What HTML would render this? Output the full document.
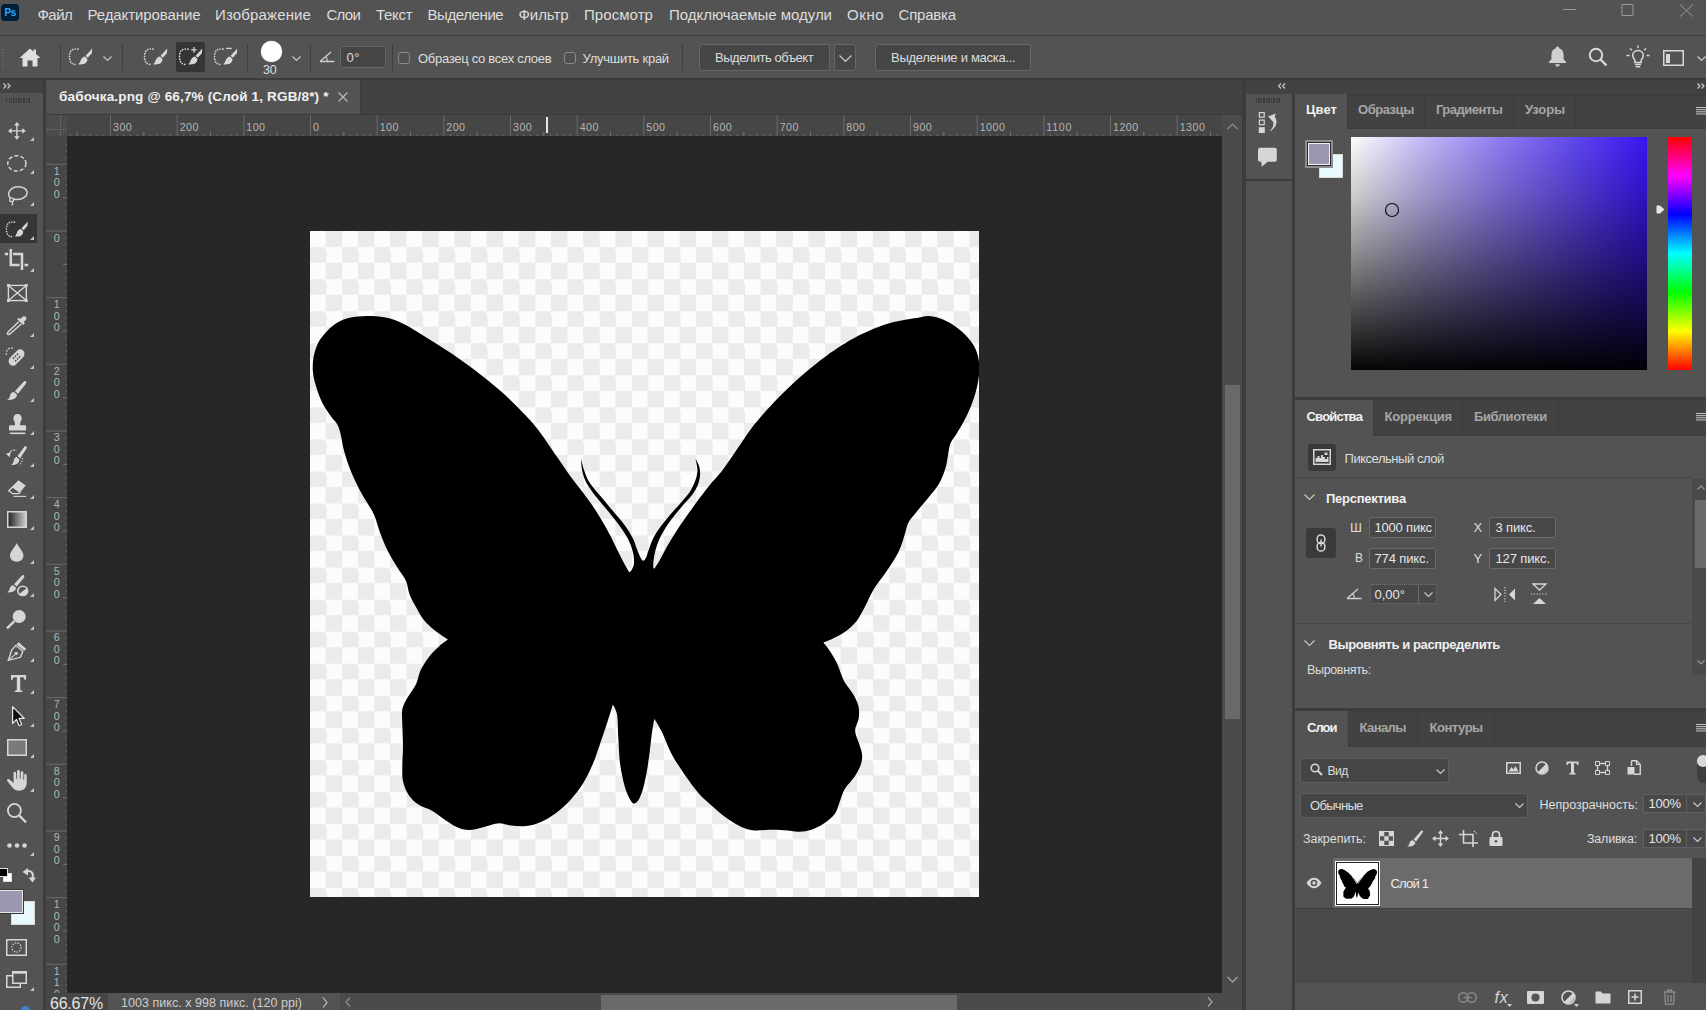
<!DOCTYPE html>
<html lang="ru"><head><meta charset="utf-8"><title>Photoshop</title>
<style>
html,body{margin:0;padding:0;}
body{width:1706px;height:1010px;overflow:hidden;background:#535353;position:relative;font-family:"Liberation Sans",sans-serif;}
div,span,svg{position:absolute;display:block;box-sizing:border-box;}
span{white-space:nowrap;}
svg{overflow:visible;}
</style></head><body>
<div style="left:0px;top:35px;width:1706px;height:1px;background:#3d3d3d;"></div>
<div style="left:0px;top:78px;width:1706px;height:2px;background:#3c3c3c;"></div>
<div style="left:0px;top:80px;width:43px;height:13px;background:#424242;"></div>
<div style="left:43px;top:80px;width:3px;height:930px;background:#3c3c3c;"></div>
<div style="left:46px;top:80px;width:1196px;height:34px;background:#424242;"></div>
<div style="left:46px;top:80px;width:314px;height:34px;background:#535353;"></div>
<div style="left:360px;top:80px;width:1px;height:34px;background:#3c3c3c;"></div>
<div style="left:46px;top:114px;width:1196px;height:1px;background:#3c3c3c;"></div>
<div style="left:46px;top:115px;width:1176px;height:21px;background:#464646;"></div>
<div style="left:46px;top:136px;width:21px;height:857px;background:#464646;"></div>
<div style="left:67px;top:136px;width:1155px;height:857px;background:#272727;"></div>
<div style="left:310px;top:231px;width:669px;height:666px;background:repeating-conic-gradient(#ebebeb 0% 25%,#fcfcfc 0% 50%) 0 -0.4px/32.2px 32.06px;"></div>
<svg style="left:310px;top:231px;overflow:hidden;" width="669" height="666" viewBox="0 0 669 666"><path fill="#000" d="M319.2 341.3C319.6 340.9 321.0 340.2 321.8 338.7C322.6 337.2 323.8 335.1 324.0 332.3C324.2 329.5 323.9 325.6 323.1 322.0C322.3 318.4 321.1 314.5 319.2 310.4C317.3 306.3 314.9 302.4 311.5 297.5C308.1 292.6 302.9 286.2 298.6 280.8C294.3 275.4 289.5 270.2 285.7 265.3C282.0 260.4 278.4 255.5 276.1 251.2C273.9 246.9 273.1 243.6 272.2 239.6C271.3 235.6 271.1 229.4 270.9 227.4C271.5 229.4 272.8 235.6 274.2 239.6C275.6 243.6 276.7 247.1 279.3 251.2C281.9 255.3 285.7 259.3 289.6 264.0C293.5 268.7 298.2 274.4 302.5 279.5C306.8 284.6 311.9 290.2 315.3 294.9C318.7 299.6 321.2 303.9 323.1 307.8C325.0 311.7 325.7 315.1 326.9 318.1C328.1 321.1 329.1 323.9 330.1 325.8C331.1 327.7 332.0 329.5 333.0 329.7C334.0 329.9 335.0 328.8 335.9 327.1C336.8 325.4 337.3 322.6 338.5 319.4C339.7 316.2 341.1 311.7 343.0 307.8C344.9 303.9 347.2 300.3 350.1 296.2C353.0 292.1 356.8 287.7 360.4 283.4C364.0 279.1 368.6 274.6 372.0 270.5C375.4 266.4 378.6 262.8 381.0 258.9C383.4 255.0 385.0 250.7 386.1 247.3C387.2 243.9 387.5 241.6 387.4 238.3C387.3 235.0 385.8 229.2 385.5 227.4C386.1 228.8 388.5 232.8 389.3 235.7C390.0 238.6 390.3 241.5 390.0 244.7C389.7 247.9 388.9 251.6 387.4 255.0C385.9 258.4 383.8 261.7 381.0 265.3C378.2 268.9 374.1 272.8 370.7 276.9C367.3 281.0 363.6 285.3 360.4 289.8C357.2 294.3 353.8 299.4 351.4 303.9C349.0 308.4 347.5 312.7 346.2 316.8C344.9 320.9 344.2 325.2 343.7 328.4C343.2 331.6 343.2 334.5 343.3 336.1C343.4 337.7 344.1 337.4 344.3 337.7C345.3 336.2 347.9 332.3 350.1 328.4C352.4 324.5 354.8 319.4 357.8 314.2C360.8 309.1 364.5 303.1 368.1 297.5C371.8 291.9 376.1 286.0 379.7 280.8C383.4 275.7 386.6 271.1 390.0 266.6C393.4 262.1 396.2 258.4 400.0 253.7C403.8 249.0 407.8 245.4 413.0 238.5C418.2 231.6 425.7 220.1 431.0 212.5C436.3 204.9 438.9 200.2 444.9 192.8C450.9 185.4 459.3 176.1 467.1 168.0C474.9 159.9 483.6 151.7 491.9 144.5C500.1 137.3 508.4 130.7 516.6 124.7C524.9 118.7 534.4 112.7 541.4 108.6C548.4 104.5 552.5 102.6 558.7 99.9C564.9 97.2 571.9 94.4 578.5 92.5C585.1 90.6 593.3 89.2 598.3 88.3C603.2 87.4 604.9 87.3 608.2 86.8C611.5 86.3 614.4 85.0 618.1 85.1C621.8 85.2 626.4 86.2 630.5 87.6C634.6 89.1 638.8 91.1 642.9 93.8C647.0 96.5 651.7 100.2 655.2 103.7C658.7 107.2 661.8 111.1 663.9 114.8C666.0 118.5 667.2 122.0 668.1 125.9C669.0 129.8 669.5 133.8 669.4 138.3C669.3 142.9 668.7 147.8 667.6 153.2C666.5 158.6 664.8 164.7 662.7 170.5C660.6 176.3 657.9 182.4 655.2 187.8C652.5 193.2 649.1 198.6 646.6 202.7C644.1 206.8 641.9 208.9 640.4 212.6C638.9 216.3 638.7 220.8 637.9 224.9C637.1 229.0 636.8 232.8 635.4 237.3C634.0 241.9 632.2 247.2 629.3 252.2C626.4 257.1 622.0 262.1 618.1 267.0C614.2 271.9 609.0 277.8 605.7 281.9C602.4 286.0 600.1 288.1 598.3 291.8C596.4 295.5 596.2 299.2 594.6 304.1C593.0 309.0 591.5 315.1 588.4 321.2C585.3 327.4 580.1 334.8 576.0 341.0C571.9 347.2 567.2 352.5 563.7 358.3C560.2 364.1 557.9 370.2 555.0 375.6C552.1 381.0 549.8 386.2 546.3 390.5C542.8 394.8 538.1 398.6 534.0 401.6C529.9 404.6 525.0 406.6 521.6 408.3C518.2 409.9 514.8 411.0 513.4 411.5C514.4 412.8 516.9 415.7 519.1 419.0C521.3 422.3 524.0 426.1 526.5 431.3C529.0 436.4 531.3 444.7 534.0 449.9C536.7 455.1 540.2 458.2 542.6 462.3C545.0 466.4 547.3 470.5 548.3 474.6C549.3 478.7 549.3 482.9 548.8 487.0C548.3 491.1 545.1 495.3 545.1 499.4C545.1 503.5 547.6 507.9 548.8 511.8C549.9 515.7 551.6 519.3 552.0 522.9C552.4 526.5 552.1 529.4 550.9 533.2C549.7 537.0 547.4 541.4 544.7 545.5C542.0 549.6 537.3 553.8 534.8 557.9C532.3 562.0 531.5 566.2 529.9 570.3C528.2 574.4 527.6 579.0 524.9 582.7C522.2 586.4 517.7 589.9 513.8 592.6C509.9 595.3 505.5 597.4 501.4 598.8C497.3 600.1 493.5 600.6 489.0 600.7C484.5 600.8 479.2 599.5 474.2 599.2C469.2 598.9 464.2 598.8 459.3 598.8C454.3 598.8 449.0 599.9 444.5 599.5C440.0 599.1 436.6 598.3 432.1 596.3C427.6 594.3 422.2 591.1 417.2 587.6C412.2 584.1 407.1 579.4 402.4 575.2C397.7 571.0 393.5 567.9 388.8 562.5C384.1 557.1 378.5 549.3 374.0 542.7C369.5 536.1 365.3 529.9 361.6 522.9C357.9 515.9 354.6 506.5 351.7 500.6C348.8 494.7 345.5 489.9 344.3 487.7C343.9 490.3 342.7 496.4 341.8 503.1C340.9 509.8 340.0 519.5 338.8 527.8C337.6 536.0 336.0 546.0 334.4 552.6C332.8 559.2 331.1 564.1 329.4 567.4C327.7 570.7 325.6 572.4 324.0 572.4C322.4 572.4 321.1 570.3 319.5 567.4C317.9 564.5 316.2 560.8 314.6 555.0C313.0 549.2 311.1 540.6 310.1 532.8C309.1 525.0 308.9 516.1 308.4 508.0C307.9 499.9 308.0 489.8 307.1 484.0C306.2 478.2 303.6 475.2 302.9 473.4C302.0 476.3 299.6 484.1 297.5 490.7C295.4 497.3 292.4 506.0 290.0 513.0C287.6 520.0 285.7 526.2 282.9 532.8C280.1 539.4 276.7 546.6 273.0 552.6C269.3 558.6 265.1 563.8 260.6 568.7C256.1 573.7 250.7 578.6 245.7 582.3C240.8 586.0 235.9 588.8 230.9 590.9C225.9 593.0 221.0 594.5 216.0 595.1C211.0 595.7 205.7 595.1 201.2 594.6C196.7 594.1 193.3 592.0 188.8 592.2C184.3 592.4 178.9 594.8 174.0 595.9C169.1 597.0 163.7 598.9 159.1 598.9C154.6 598.9 150.8 597.6 146.7 595.9C142.6 594.2 138.5 591.2 134.4 588.5C130.3 585.8 126.3 582.3 122.0 579.8C117.7 577.3 112.3 576.3 108.4 573.6C104.5 570.9 101.1 567.6 98.5 563.7C95.9 559.8 94.0 554.9 93.0 550.1C92.0 545.4 92.3 541.0 92.3 535.2C92.3 529.4 93.0 522.4 93.0 515.4C93.0 508.4 92.4 499.4 92.3 493.2C92.2 487.0 91.5 482.6 92.3 478.3C93.1 474.0 94.9 471.3 97.2 467.2C99.5 463.1 103.6 458.4 105.9 453.6C108.2 448.9 108.4 443.6 110.8 438.7C113.2 433.8 117.4 427.9 120.5 424.0C123.6 420.1 126.3 417.8 129.2 415.2C132.1 412.6 136.4 409.7 137.9 408.6C135.6 407.0 128.4 402.5 124.3 399.1C120.2 395.7 116.2 391.9 113.1 388.0C110.0 384.1 108.0 379.7 105.7 375.6C103.4 371.5 101.1 367.6 99.5 363.3C97.9 359.0 97.9 354.1 95.8 349.6C93.7 345.1 90.2 341.1 87.1 336.0C84.0 330.9 80.1 324.5 77.2 318.7C74.3 313.0 72.1 307.2 70.0 301.5C67.9 295.8 66.3 289.0 64.3 284.3C62.3 279.6 60.6 277.5 58.1 273.2C55.6 268.9 52.3 264.0 49.4 258.4C46.5 252.8 43.2 246.2 40.7 239.8C38.1 233.4 35.8 226.0 34.1 220.0C32.5 214.0 31.9 208.2 30.8 203.9C29.7 199.6 29.2 197.1 27.6 194.0C26.0 190.9 23.4 189.0 20.9 185.3C18.3 181.6 14.8 176.6 12.3 171.7C9.8 166.8 7.7 160.8 6.1 155.6C4.5 150.5 3.3 145.8 2.9 140.8C2.5 135.9 2.7 130.8 3.6 125.9C4.6 120.9 6.3 115.4 8.6 111.1C10.9 106.8 14.1 103.1 17.2 99.9C20.3 96.7 23.4 94.0 27.1 91.8C30.8 89.6 34.6 87.9 39.5 86.8C44.4 85.7 51.0 85.2 56.8 85.1C62.6 85.0 68.8 85.4 74.2 86.3C79.6 87.2 84.1 88.7 89.0 90.8C93.9 92.9 98.1 95.3 103.9 98.7C109.7 102.1 116.3 106.4 123.7 111.1C131.1 115.9 140.1 121.4 148.4 127.2C156.6 133.0 165.4 139.5 173.2 145.7C181.0 151.9 188.4 157.9 195.4 164.3C202.4 170.7 209.4 177.9 215.2 184.1C221.0 190.3 224.8 194.4 230.1 201.4C235.4 208.4 242.1 218.9 247.1 226.1C252.1 233.3 255.7 238.8 260.0 244.7C264.3 250.6 268.6 255.7 272.9 261.5C277.2 267.3 281.4 272.9 285.7 279.5C290.0 286.1 295.0 294.8 298.6 301.4C302.2 308.0 305.0 314.2 307.6 319.4C310.2 324.5 312.2 328.6 314.1 332.3C316.0 335.9 318.4 339.8 319.2 341.3Z"/></svg>
<div style="left:1222px;top:115px;width:20px;height:878px;background:#4b4b4b;"></div>
<div style="left:1225px;top:385px;width:15px;height:334px;background:#696969;"></div>
<div style="left:46px;top:993px;width:1196px;height:17px;background:#4b4b4b;"></div>
<div style="left:601px;top:995px;width:356px;height:15px;background:#6a6a6a;"></div>
<div style="left:46px;top:993px;width:62px;height:17px;background:#424242;"></div>
<div style="left:108px;top:993px;width:232px;height:17px;background:#535353;"></div>
<div style="left:1242px;top:80px;width:4px;height:930px;background:#3c3c3c;"></div>
<div style="left:1246px;top:80px;width:460px;height:14px;background:#424242;"></div>
<div style="left:1246px;top:94px;width:46px;height:85px;background:#535353;"></div>
<div style="left:1246px;top:179px;width:46px;height:2px;background:#3c3c3c;"></div>
<div style="left:1246px;top:181px;width:46px;height:829px;background:#535353;"></div>
<div style="left:1292px;top:94px;width:3px;height:916px;background:#3c3c3c;"></div>
<div style="left:0px;top:214px;width:37px;height:29px;background:#353535;"></div>
<svg style="left:7.5px;top:121.9px;" width="17.8" height="17.8"><g transform="translate(-0.36 -0.36) scale(0.712 0.712)"><path d="M13 3V23M3 13H23" stroke="#d6d6d6" fill="none" stroke-width="1.9"/><path d="M13 0.5L9 5.5H17ZM13 25.5L9 20.5H17ZM0.5 13L5.5 9V17ZM25.5 13L20.5 9V17Z" fill="#d6d6d6"/></g></svg>
<svg style="left:30px;top:137px;" width="4" height="4" viewBox="0 0 4 4"><path d="M4 0V4H0Z" fill="#c4c4c4"/></svg>
<svg style="left:7px;top:155px;" width="19.7" height="16.8"><g transform="translate(-2.60 -4.03) scale(0.958 0.956)"><ellipse cx="13" cy="13" rx="9.5" ry="8" stroke="#d6d6d6" fill="none" stroke-width="1.5" stroke-dasharray="4.2 2.2"/></g></svg>
<svg style="left:30px;top:170px;" width="4" height="4" viewBox="0 0 4 4"><path d="M4 0V4H0Z" fill="#c4c4c4"/></svg>
<svg style="left:7.9px;top:186px;" width="19.8" height="20"><g transform="translate(-2.78 -4.68) scale(0.958 0.979)"><path d="M5.5 17.5C1 13 5 5.5 13.5 5.5C20.5 5.5 24 9.5 22.5 13.5C21 17.5 14.5 19.5 8 18" stroke="#d6d6d6" fill="none" stroke-width="1.5"/><circle cx="6.7" cy="18.8" r="2" stroke="#d6d6d6" fill="none" stroke-width="1.3"/><path d="M7 20.5C8.5 22 8 23.5 6.5 24.5" stroke="#d6d6d6" fill="none" stroke-width="1.3"/></g></svg>
<svg style="left:30px;top:202px;" width="4" height="4" viewBox="0 0 4 4"><path d="M4 0V4H0Z" fill="#c4c4c4"/></svg>
<svg style="left:5.9px;top:220.7px;" width="22.2" height="16.1"><g transform="translate(-1.01 -1.88) scale(0.939 0.949)"><path d="M10 3.2C4 2.2 1.5 5 1.5 10.5C1.5 16.5 4 18.8 9 18.5" stroke="#d6d6d6" stroke-width="1.7" stroke-dasharray="0.1 2.55" stroke-linecap="round" fill="none"/><path d="M24.3 2.4L23.8 7.2L19.8 11.8L17.6 9.7Z" fill="#d6d6d6"/><path d="M17 10.4L19.3 12.7C19.8 15 18 18 14.5 18.3C12.8 18.5 11.3 18.4 10.2 18.2C11.8 17.2 12 15.8 12.8 14C13.6 12 15.2 10.6 17 10.4Z" fill="#d6d6d6"/></g></svg>
<svg style="left:30px;top:236px;" width="4" height="4" viewBox="0 0 4 4"><path d="M4 0V4H0Z" fill="#c4c4c4"/></svg>
<svg style="left:4px;top:248px;" width="26" height="24" viewBox="0 0 26 24"><path d="M6.8 1V17H15.5M9 6H18V22" stroke="#d6d6d6" fill="none" stroke-width="2.5"/><path d="M0.8 6H4M20.5 17H24.2" stroke="#d6d6d6" fill="none" stroke-width="2.5"/></svg>
<svg style="left:30px;top:268px;" width="4" height="4" viewBox="0 0 4 4"><path d="M4 0V4H0Z" fill="#c4c4c4"/></svg>
<svg style="left:7px;top:284px;" width="20.7" height="18"><g transform="translate(-1.88 -2.84) scale(0.941 0.947)"><rect x="3.5" y="4.5" width="19" height="16" stroke="#d6d6d6" fill="none" stroke-width="1.5"/><path d="M3.5 4.5L22.5 20.5M22.5 4.5L3.5 20.5" stroke="#d6d6d6" fill="none" stroke-width="1.5"/><path d="M2 3H5V6H2ZM21 3H24V6H21ZM2 19H5V22H2ZM21 19H24V22H21Z" fill="#d6d6d6"/></g></svg>
<svg style="left:7px;top:316px;" width="19.7" height="18.8"><g transform="translate(-2.49 -1.07) scale(0.941 0.866)"><path d="M19.5 2C21.2 0.8 23.7 2.3 23.2 4.8C23 5.8 22 6.7 20.3 8.2L21.8 9.7L19.9 11.6L13.4 5.1L15.3 3.2L16.8 4.7C17.8 3.5 18.6 2.6 19.5 2Z" fill="#d6d6d6"/><path d="M15.2 8L5 18.2C3.6 19.6 2.8 20.4 3 21.6C3.2 22.8 4.8 23 6 21.8L17.8 10.6" stroke="#d6d6d6" fill="none" stroke-width="1.6"/></g></svg>
<svg style="left:30px;top:333px;" width="4" height="4" viewBox="0 0 4 4"><path d="M4 0V4H0Z" fill="#c4c4c4"/></svg>
<svg style="left:6.2px;top:346.7px;" width="20.5" height="21"><g transform="translate(-1.06 -1.68) scale(0.799 0.880)"><path d="M10 3.5C5 1.5 0.5 5.5 2 12" stroke="#d6d6d6" fill="none" stroke-width="1.4" stroke-dasharray="2.2 1.7"/><g transform="rotate(-42 14 14)"><rect x="3" y="9" width="23" height="10.5" rx="5.2" fill="#d6d6d6"/><circle cx="11.2" cy="12.3" r="1.15" fill="#535353"/><circle cx="14.5" cy="12.3" r="1.15" fill="#535353"/><circle cx="17.8" cy="12.3" r="1.15" fill="#535353"/><circle cx="11.2" cy="16.3" r="1.15" fill="#535353"/><circle cx="14.5" cy="16.3" r="1.15" fill="#535353"/><circle cx="17.8" cy="16.3" r="1.15" fill="#535353"/></g></g></svg>
<svg style="left:30px;top:365px;" width="4" height="4" viewBox="0 0 4 4"><path d="M4 0V4H0Z" fill="#c4c4c4"/></svg>
<svg style="left:7px;top:381px;" width="19.4" height="19"><g transform="translate(-2.76 -1.01) scale(0.920 0.886)"><path d="M23.2 1.3C24.4 1.9 24.3 3.4 23.4 4.6L15 15.5L11.6 12.6L20.8 2.2C21.6 1.3 22.4 0.9 23.2 1.3Z" fill="#d6d6d6"/><path d="M10.6 13.6L13.8 16.4C14.2 20 10 23.2 3 22.5C5.5 21 6 19.5 6.3 17.5C6.6 15.3 8.5 13.7 10.6 13.6Z" fill="#d6d6d6"/></g></svg>
<svg style="left:30px;top:398px;" width="4" height="4" viewBox="0 0 4 4"><path d="M4 0V4H0Z" fill="#c4c4c4"/></svg>
<svg style="left:9.3px;top:414px;" width="17.1" height="19.3"><g transform="translate(-3.40 -2.00) scale(0.919 1.000)"><path d="M13 2C15.8 2 17.5 4 17.5 6.3C17.5 8.5 15.8 9.8 15.8 12V13.3H21C21.8 13.3 22.3 13.8 22.3 14.6V18.5H3.7V14.6C3.7 13.8 4.2 13.3 5 13.3H10.2V12C10.2 9.8 8.5 8.5 8.5 6.3C8.5 4 10.2 2 13 2Z" fill="#d6d6d6"/><path d="M4.5 21.3H21.5" stroke="#d6d6d6" fill="none" stroke-width="1.6"/></g></svg>
<svg style="left:30px;top:431px;" width="4" height="4" viewBox="0 0 4 4"><path d="M4 0V4H0Z" fill="#c4c4c4"/></svg>
<svg style="left:6.2px;top:446px;" width="20.8" height="19.4"><g transform="translate(-0.43 -1.07) scale(0.853 0.930)"><path d="M24 1.3C25.2 1.9 25.1 3.3 24.2 4.5L17 14.6L14 12L21.8 2.2C22.5 1.3 23.2 0.9 24 1.3Z" fill="#d6d6d6"/><path d="M13.1 13L16.1 15.6C16.4 19 13 22 6.5 21.5C8.7 20.2 9.3 18.8 9.6 17C9.9 14.8 11.4 13.2 13.1 13Z" fill="#d6d6d6"/><path d="M3.5 10.5C5 6.5 9 4.5 13 6" stroke="#d6d6d6" fill="none" stroke-width="1.3" stroke-dasharray="2.4 1.4"/><path d="M0.5 9.5L6.2 7.8L4.6 13.2Z" fill="#d6d6d6"/><path d="M19.5 14C20 17 18.5 20 16 22" stroke="#d6d6d6" fill="none" stroke-width="1.2" stroke-dasharray="1.3 1.6"/></g></svg>
<svg style="left:30px;top:463px;" width="4" height="4" viewBox="0 0 4 4"><path d="M4 0V4H0Z" fill="#c4c4c4"/></svg>
<svg style="left:7.5px;top:480px;" width="18.5" height="16.7"><g transform="translate(-3.83 -2.31) scale(0.918 0.870)"><path d="M15.5 3L23.5 9L16.5 18H9L4.5 14.8Z" fill="#d6d6d6"/><path d="M5 15L9.3 18.3H16L17.2 16.8L9.2 10.8Z" fill="#535353" stroke="#d6d6d6" stroke-width="1.4"/><path d="M10 21.5H24" stroke="#d6d6d6" fill="none" stroke-width="1.3"/></g></svg>
<svg style="left:30px;top:495px;" width="4" height="4" viewBox="0 0 4 4"><path d="M4 0V4H0Z" fill="#c4c4c4"/></svg>
<svg style="left:7px;top:511px;" width="20" height="17" viewBox="0 0 20 17"><defs><linearGradient id="gg" x1="0" x2="1"><stop offset="0.05" stop-color="#2a2a2a"/><stop offset="1" stop-color="#cfcfcf"/></linearGradient></defs><rect x="0.75" y="0.75" width="18.5" height="15.5" fill="url(#gg)" stroke="#d6d6d6" stroke-width="1.5"/></svg>
<svg style="left:30px;top:526px;" width="4" height="4" viewBox="0 0 4 4"><path d="M4 0V4H0Z" fill="#c4c4c4"/></svg>
<svg style="left:10.3px;top:543.3px;" width="13.5" height="18.7"><g transform="translate(-6.75 -2.34) scale(1.038 0.935)"><path d="M13 2.5C15 7.5 19.5 11.5 19.5 16C19.5 20 16.7 22.5 13 22.5C9.3 22.5 6.5 20 6.5 16C6.5 11.5 11 7.5 13 2.5Z" fill="#d6d6d6"/></g></svg>
<svg style="left:30px;top:560px;" width="4" height="4" viewBox="0 0 4 4"><path d="M4 0V4H0Z" fill="#c4c4c4"/></svg>
<svg style="left:7px;top:575px;" width="20.7" height="20.7"><g transform="translate(-3.04 -1.15) scale(1.014 0.973)"><path d="M19.3 1.3C20.4 1.8 20.3 3 19.6 4L12.6 13L9.9 10.7L17.6 2C18.2 1.3 18.7 1 19.3 1.3Z" fill="#d6d6d6"/><path d="M9 11.6L11.8 14C12 17 9 19.5 3 19C5 17.8 5.5 16.5 5.7 15C6 13 7.4 11.7 9 11.6Z" fill="#d6d6d6"/><circle cx="18.5" cy="17.5" r="4.8" stroke="#d6d6d6" fill="none" stroke-width="1.6"/><path d="M14.8 20.6A4.8 4.8 0 0 0 22.4 14.7Z" fill="#d6d6d6"/></g></svg>
<svg style="left:30px;top:593px;" width="4" height="4" viewBox="0 0 4 4"><path d="M4 0V4H0Z" fill="#c4c4c4"/></svg>
<svg style="left:7.3px;top:609.6px;" width="18.7" height="18.4"><g transform="translate(-3.27 -1.84) scale(0.935 0.920)"><circle cx="16.5" cy="9" r="7" fill="#d6d6d6"/><path d="M11.5 14L3.5 22" stroke="#d6d6d6" fill="none" stroke-width="2.6"/></g></svg>
<svg style="left:30px;top:626px;" width="4" height="4" viewBox="0 0 4 4"><path d="M4 0V4H0Z" fill="#c4c4c4"/></svg>
<svg style="left:8px;top:641.9px;" width="18.7" height="18.6"><g transform="translate(-3.38 -0.94) scale(0.968 0.829)"><path d="M14.5 1.5L22.5 9.5L20.2 11.8L12.2 3.8Z" fill="#d6d6d6"/><path d="M11.6 5.2L18.8 12.4L16.3 19.6L3.8 23.2L7.4 10.7Z" stroke="#d6d6d6" fill="none" stroke-width="1.5"/><path d="M4 23L11 16" stroke="#d6d6d6" fill="none" stroke-width="1.2"/><circle cx="12" cy="15" r="1.8" fill="#d6d6d6"/></g></svg>
<svg style="left:30px;top:658px;" width="4" height="4" viewBox="0 0 4 4"><path d="M4 0V4H0Z" fill="#c4c4c4"/></svg>
<svg style="left:10.9px;top:674.9px;" width="15.1" height="17.1"><g transform="translate(-0.44 -0.48) scale(0.888 0.950)"><path d="M0.5 0.5H17.5V5.4H15.6C15.3 3.8 14.8 3 13.3 3H10.9V15.3C10.9 16.5 11.5 16.9 13.2 17.1V18.5H4.8V17.1C6.5 16.9 7.1 16.5 7.1 15.3V3H4.7C3.2 3 2.7 3.8 2.4 5.4H0.5Z" fill="#d6d6d6"/></g></svg>
<svg style="left:30px;top:690px;" width="4" height="4" viewBox="0 0 4 4"><path d="M4 0V4H0Z" fill="#c4c4c4"/></svg>
<svg style="left:11.9px;top:706px;" width="12.9" height="20.3"><g transform="translate(-5.90 -1.67) scale(0.867 0.910)"><path d="M7.5 2.5V21L12 16.5L15 23.5L18 22.2L15 15.5H21Z" fill="#0c0c0c" stroke="#e8e8e8" stroke-width="1.4" stroke-linejoin="round"/></g></svg>
<svg style="left:30px;top:723px;" width="4" height="4" viewBox="0 0 4 4"><path d="M4 0V4H0Z" fill="#c4c4c4"/></svg>
<svg style="left:7px;top:739px;" width="20" height="17" viewBox="0 0 20 17"><rect x="0.75" y="0.75" width="18.5" height="15.5" fill="#7a7a7a" stroke="#d6d6d6" stroke-width="1.5"/></svg>
<svg style="left:30px;top:754px;" width="4" height="4" viewBox="0 0 4 4"><path d="M4 0V4H0Z" fill="#c4c4c4"/></svg>
<svg style="left:7.3px;top:770px;" width="19.7" height="20.7"><g transform="translate(-3.32 -1.85) scale(1.096 0.959)"><path d="M9 12V5C9 3.3 11.4 3.3 11.4 5V11H12.2V3.2C12.2 1.5 14.7 1.5 14.7 3.2V11H15.5V4.5C15.5 2.8 17.9 2.8 17.9 4.5V12H18.7V7.5C18.7 5.8 21 5.8 21 7.5V15.5C21 20 18.5 23.5 14 23.5C10.5 23.5 8.8 21.8 7 19L3.3 13.5C2.3 12 4.3 10.6 5.6 12L9 15.5Z" fill="#d6d6d6"/></g></svg>
<svg style="left:30px;top:788px;" width="4" height="4" viewBox="0 0 4 4"><path d="M4 0V4H0Z" fill="#c4c4c4"/></svg>
<svg style="left:7px;top:803px;" width="20" height="20.4"><g transform="translate(-2.07 -2.14) scale(0.901 0.921)"><circle cx="10.5" cy="10.5" r="7.2" stroke="#d6d6d6" fill="none" stroke-width="2"/><path d="M15.8 15.8L23.5 23.5" stroke="#d6d6d6" fill="none" stroke-width="2.6"/></g></svg>
<svg style="left:7px;top:842.5px;" width="20" height="5" viewBox="0 0 20 5"><circle cx="2.5" cy="2.5" r="2.3" fill="#d6d6d6"/><circle cx="10" cy="2.5" r="2.3" fill="#d6d6d6"/><circle cx="17.5" cy="2.5" r="2.3" fill="#d6d6d6"/></svg>
<svg style="left:30px;top:852px;" width="4" height="4" viewBox="0 0 4 4"><path d="M4 0V4H0Z" fill="#c4c4c4"/></svg>
<div style="left:3px;top:873px;width:9px;height:9px;background:#fff;border:1px solid #ddd;"></div>
<div style="left:-1px;top:868px;width:9px;height:9px;background:#000;border:1px solid #ddd;"></div>
<svg style="left:22px;top:867px;" width="14" height="16" viewBox="0 0 14 16"><path d="M4 4.5C9 3 12 6 10.5 11" stroke="#d6d6d6" fill="none" stroke-width="2"/><path d="M0.5 5L6 1V8.5ZM6.5 10.5H14L10.5 15.5Z" fill="#d6d6d6"/></svg>
<div style="left:11px;top:901px;width:24px;height:24px;background:#e8faff;border:1px solid #d9d9d9;"></div>
<div style="left:-2px;top:890px;width:25px;height:23px;background:#9b97b3;border:1px solid #e6e6e6;box-shadow:0 0 0 1px #3a3a3a;"></div>
<svg style="left:6px;top:939px;" width="21" height="17" viewBox="0 0 21 17"><rect x="0.75" y="0.75" width="19.5" height="15.5" stroke="#d6d6d6" fill="none" stroke-width="1.5"/><circle cx="10.5" cy="8.5" r="4.6" stroke="#d6d6d6" fill="none" stroke-width="1.2" stroke-dasharray="1.4 1.4"/></svg>
<svg style="left:6px;top:971px;" width="21" height="18" viewBox="0 0 21 18"><rect x="0.75" y="4.75" width="13.5" height="11.5" stroke="#d6d6d6" fill="none" stroke-width="1.5"/><rect x="6.75" y="0.75" width="13.5" height="11.5" fill="#535353" stroke="#d6d6d6" stroke-width="1.5"/><path d="M6.75 1.5H20.25" stroke="#d6d6d6" fill="none" stroke-width="2.4"/></svg>
<div style="left:21px;top:1006px;width:9px;height:9px;background:#3f7fd6;border-radius:50%;"></div>
<svg style="left:30px;top:987px;" width="4" height="4" viewBox="0 0 4 4"><path d="M4 0V4H0Z" fill="#c4c4c4"/></svg>
<div style="left:1px;top:4px;width:18px;height:17px;background:#001e36;border-radius:4px;"></div>
<span style="left:4.5px;top:6px;height:13px;line-height:13px;font-size:10px;color:#31a8ff;font-weight:700;letter-spacing:-0.490px;">Ps</span>
<span style="left:37.5px;top:5px;height:20px;line-height:20px;font-size:15px;color:#dddddd;font-weight:400;letter-spacing:-0.540px;">Файл</span>
<span style="left:87.5px;top:5px;height:20px;line-height:20px;font-size:15px;color:#dddddd;font-weight:400;letter-spacing:-0.094px;">Редактирование</span>
<span style="left:215px;top:5px;height:20px;line-height:20px;font-size:15px;color:#dddddd;font-weight:400;letter-spacing:0.143px;">Изображение</span>
<span style="left:326.5px;top:5px;height:20px;line-height:20px;font-size:15px;color:#dddddd;font-weight:400;letter-spacing:-0.710px;">Слои</span>
<span style="left:376px;top:5px;height:20px;line-height:20px;font-size:15px;color:#dddddd;font-weight:400;letter-spacing:-0.281px;">Текст</span>
<span style="left:427.5px;top:5px;height:20px;line-height:20px;font-size:15px;color:#dddddd;font-weight:400;letter-spacing:-0.410px;">Выделение</span>
<span style="left:518.5px;top:5px;height:20px;line-height:20px;font-size:15px;color:#dddddd;font-weight:400;letter-spacing:-0.071px;">Фильтр</span>
<span style="left:584px;top:5px;height:20px;line-height:20px;font-size:15px;color:#dddddd;font-weight:400;letter-spacing:0.065px;">Просмотр</span>
<span style="left:669px;top:5px;height:20px;line-height:20px;font-size:15px;color:#dddddd;font-weight:400;letter-spacing:-0.024px;">Подключаемые модули</span>
<span style="left:847px;top:5px;height:20px;line-height:20px;font-size:15px;color:#dddddd;font-weight:400;letter-spacing:0.612px;">Окно</span>
<span style="left:898.5px;top:5px;height:20px;line-height:20px;font-size:15px;color:#dddddd;font-weight:400;letter-spacing:-0.207px;">Справка</span>
<svg style="left:1563px;top:4px;" width="140" height="14" viewBox="0 0 140 14"><path d="M0 5.5H13M59 0.5H70V11.5H59Z M117 0.5L130 12.5M130 0.5L117 12.5" stroke="#9a9a9a" stroke-width="1" fill="none"/></svg>
<div style="left:2px;top:46px;width:2px;height:23px;background:repeating-linear-gradient(#666 0 1px,transparent 1px 3px);"></div>
<svg style="left:19px;top:48px;" width="22" height="19" viewBox="0 0 22 19"><path d="M11 0.5L0.5 10H3.5V18.5H8.5V12.5H13.5V18.5H18.5V10H21.5L17 6V1.5H14.5V3.7Z" fill="#e0e0e0"/></svg>
<div style="left:60px;top:44px;width:1px;height:27px;background:#3f3f3f;"></div>
<div style="left:122px;top:44px;width:1px;height:27px;background:#3f3f3f;"></div>
<div style="left:247px;top:44px;width:1px;height:27px;background:#3f3f3f;"></div>
<div style="left:310px;top:44px;width:1px;height:27px;background:#3f3f3f;"></div>
<div style="left:392px;top:44px;width:1px;height:27px;background:#3f3f3f;"></div>
<div style="left:682px;top:44px;width:1px;height:27px;background:#3f3f3f;"></div>
<svg style="left:67.9px;top:46px;" width="26" height="22" viewBox="0 0 26 22"><path d="M10 3.2C4 2.2 1.5 5 1.5 10.5C1.5 16.5 4 18.8 9 18.5" stroke="#d8d8d8" stroke-width="1.7" stroke-dasharray="0.1 2.55" stroke-linecap="round" fill="none"/><path d="M24.3 2.4L23.8 7.2L19.8 11.8L17.6 9.7Z" fill="#d8d8d8"/><path d="M17 10.4L19.3 12.7C19.8 15 18 18 14.5 18.3C12.8 18.5 11.3 18.4 10.2 18.2C11.8 17.2 12 15.8 12.8 14C13.6 12 15.2 10.6 17 10.4Z" fill="#d8d8d8"/></svg>
<svg style="left:103px;top:56px;" width="9" height="5" viewBox="0 0 9 5"><path d="M0.5 0.5L4.5 4.5L8.5 0.5" stroke="#c8c8c8" stroke-width="1.2" fill="none"/></svg>
<svg style="left:143.1px;top:46px;" width="26" height="22" viewBox="0 0 26 22"><path d="M10 3.2C4 2.2 1.5 5 1.5 10.5C1.5 16.5 4 18.8 9 18.5" stroke="#d8d8d8" stroke-width="1.7" stroke-dasharray="0.1 2.55" stroke-linecap="round" fill="none"/><path d="M24.3 2.4L23.8 7.2L19.8 11.8L17.6 9.7Z" fill="#d8d8d8"/><path d="M17 10.4L19.3 12.7C19.8 15 18 18 14.5 18.3C12.8 18.5 11.3 18.4 10.2 18.2C11.8 17.2 12 15.8 12.8 14C13.6 12 15.2 10.6 17 10.4Z" fill="#d8d8d8"/></svg>
<div style="left:176px;top:42px;width:29px;height:30px;background:#353535;border-radius:2px;"></div>
<svg style="left:177.6px;top:46px;" width="26" height="22" viewBox="0 0 26 22"><path d="M10 3.2C4 2.2 1.5 5 1.5 10.5C1.5 16.5 4 18.8 9 18.5" stroke="#d8d8d8" stroke-width="1.7" stroke-dasharray="0.1 2.55" stroke-linecap="round" fill="none"/><path d="M24.3 2.4L23.8 7.2L19.8 11.8L17.6 9.7Z" fill="#d8d8d8"/><path d="M17 10.4L19.3 12.7C19.8 15 18 18 14.5 18.3C12.8 18.5 11.3 18.4 10.2 18.2C11.8 17.2 12 15.8 12.8 14C13.6 12 15.2 10.6 17 10.4Z" fill="#d8d8d8"/><path d="M13.2 3.9H18.8M16 1.1V6.7" stroke="#d8d8d8" stroke-width="1.3"/></svg>
<svg style="left:212.7px;top:46px;" width="26" height="22" viewBox="0 0 26 22"><path d="M10 3.2C4 2.2 1.5 5 1.5 10.5C1.5 16.5 4 18.8 9 18.5" stroke="#d8d8d8" stroke-width="1.7" stroke-dasharray="0.1 2.55" stroke-linecap="round" fill="none"/><path d="M24.3 2.4L23.8 7.2L19.8 11.8L17.6 9.7Z" fill="#d8d8d8"/><path d="M17 10.4L19.3 12.7C19.8 15 18 18 14.5 18.3C12.8 18.5 11.3 18.4 10.2 18.2C11.8 17.2 12 15.8 12.8 14C13.6 12 15.2 10.6 17 10.4Z" fill="#d8d8d8"/><path d="M13.2 2.4H18.8" stroke="#d8d8d8" stroke-width="1.3"/></svg>
<div style="left:261px;top:41px;width:21px;height:21px;background:#ffffff;border-radius:50%;box-shadow:0 0 1px #fff;"></div>
<span style="left:263px;top:61.5px;height:16px;line-height:16px;font-size:12.5px;color:#dddddd;font-weight:400;letter-spacing:-0.271px;">30</span>
<svg style="left:292px;top:56px;" width="9" height="5" viewBox="0 0 9 5"><path d="M0.5 0.5L4.5 4.5L8.5 0.5" stroke="#c8c8c8" stroke-width="1.2" fill="none"/></svg>
<svg style="left:319px;top:51px;" width="17" height="12" viewBox="0 0 17 12"><path d="M1 10.5H15.5M1 10.5L12 1M8.5 10.5C8.5 8 7.5 6.3 6.2 5.2" stroke="#cfcfcf" stroke-width="1.3" fill="none"/></svg>
<div style="left:340px;top:46px;width:46px;height:22px;background:#454545;border:1px solid #666;border-radius:2px;"></div>
<span style="left:346.6px;top:48.5px;height:17px;line-height:17px;font-size:13px;color:#dddddd;font-weight:400;letter-spacing:0.308px;">0°</span>
<div style="left:398px;top:52px;width:12px;height:12px;background:#505050;border:1px solid #8a8a8a;border-radius:3px;"></div>
<span style="left:418px;top:49.5px;height:17px;line-height:17px;font-size:13px;color:#dddddd;font-weight:400;letter-spacing:-0.287px;">Образец со всех слоев</span>
<div style="left:564px;top:52px;width:12px;height:12px;background:#505050;border:1px solid #8a8a8a;border-radius:3px;"></div>
<span style="left:582.5px;top:49.5px;height:17px;line-height:17px;font-size:13px;color:#dddddd;font-weight:400;letter-spacing:-0.255px;">Улучшить край</span>
<div style="left:699px;top:43.5px;width:131px;height:27px;background:#464646;border:1px solid #666;border-radius:3px 0 0 3px;"></div>
<span style="left:715px;top:49px;height:17px;line-height:17px;font-size:13px;color:#dddddd;font-weight:400;letter-spacing:-0.447px;">Выделить объект</span>
<div style="left:834px;top:43.5px;width:22px;height:27px;background:#464646;border:1px solid #666;border-radius:0 3px 3px 0;"></div>
<svg style="left:838.5px;top:54.5px;" width="13" height="7" viewBox="0 0 13 7"><path d="M0.5 0.5L6.5 6.3L12.5 0.5" stroke="#c8c8c8" stroke-width="1.2" fill="none"/></svg>
<div style="left:875px;top:43.5px;width:156px;height:27px;background:#464646;border:1px solid #666;border-radius:3px;"></div>
<span style="left:891px;top:49px;height:17px;line-height:17px;font-size:13px;color:#dddddd;font-weight:400;letter-spacing:-0.286px;">Выделение и маска...</span>
<svg style="left:1548px;top:46px;" width="19" height="21" viewBox="0 0 19 21"><path d="M9.5 0.5C10.6 0.5 11.2 1.3 11.2 2.3C14.3 3.2 15.6 5.8 15.6 9V13.2L18 16V17H1V16L3.4 13.2V9C3.4 5.8 4.7 3.2 7.8 2.3C7.8 1.3 8.4 0.5 9.5 0.5ZM7.2 18.2H11.8C11.8 19.6 10.8 20.5 9.5 20.5C8.2 20.5 7.2 19.6 7.2 18.2Z" fill="#d0d0d0"/></svg>
<svg style="left:1588px;top:47px;" width="20" height="20" viewBox="0 0 20 20"><circle cx="8" cy="8" r="6.2" stroke="#d8d8d8" stroke-width="2" fill="none"/><path d="M12.5 12.5L18.5 18.5" stroke="#d8d8d8" stroke-width="2.4"/></svg>
<svg style="left:1626px;top:45px;" width="24" height="24" viewBox="0 0 24 24"><path d="M12 5.5C8.8 5.5 6.7 7.8 6.7 10.6C6.7 12.6 7.8 13.8 8.8 15V17.5H15.2V15C16.2 13.8 17.3 12.6 17.3 10.6C17.3 7.8 15.2 5.5 12 5.5Z" stroke="#d8d8d8" stroke-width="1.5" fill="none"/><path d="M9 19.5H15M9.8 21.8H14.2M12 0.5V3M4 3.5L5.8 5.3M20 3.5L18.2 5.3M0.5 10.5H3.5M20.5 10.5H23.5" stroke="#d8d8d8" stroke-width="1.4"/></svg>
<svg style="left:1663px;top:50px;" width="21" height="16" viewBox="0 0 21 16"><rect x="0.75" y="0.75" width="19.5" height="14.5" stroke="#d8d8d8" stroke-width="1.5" fill="none"/><rect x="3" y="4" width="4" height="9" fill="#d8d8d8"/></svg>
<svg style="left:1697px;top:56px;" width="9" height="5" viewBox="0 0 9 5"><path d="M0.5 0.5L4.5 4.5L8.5 0.5" stroke="#c8c8c8" stroke-width="1.2" fill="none"/></svg>
<svg style="left:3px;top:83px;" width="9" height="6" viewBox="0 0 9 6"><path d="M0.5 0.5L3 3L0.5 5.5M4.5 0.5L7 3L4.5 5.5" stroke="#d0d0d0" stroke-width="1.1" fill="none"/></svg>
<div style="left:6px;top:98px;width:25px;height:5px;background:repeating-linear-gradient(90deg,#3c3c3c 0 1.3px,transparent 1.3px 2.5px);"></div>
<span style="left:59px;top:87.5px;height:18px;line-height:18px;font-size:13.5px;color:#f0f0f0;font-weight:700;letter-spacing:0.164px;">бабочка.png @ 66,7% (Слой 1, RGB/8*) *</span>
<svg style="left:338px;top:92px;" width="10" height="10" viewBox="0 0 10 10"><path d="M0.5 0.5L9.5 9.5M9.5 0.5L0.5 9.5" stroke="#bdbdbd" stroke-width="1.1"/></svg>
<span style="left:113.0px;top:120.2px;height:14px;line-height:14px;font-size:10.7px;color:#b4b4b4;font-weight:400;letter-spacing:0.463px;">300</span>
<span style="left:179.7px;top:120.2px;height:14px;line-height:14px;font-size:10.7px;color:#b4b4b4;font-weight:400;letter-spacing:0.463px;">200</span>
<span style="left:246.3px;top:120.2px;height:14px;line-height:14px;font-size:10.7px;color:#b4b4b4;font-weight:400;letter-spacing:0.463px;">100</span>
<span style="left:313.0px;top:120.2px;height:14px;line-height:14px;font-size:10.7px;color:#b4b4b4;font-weight:400;letter-spacing:0.047px;">0</span>
<span style="left:379.7px;top:120.2px;height:14px;line-height:14px;font-size:10.7px;color:#b4b4b4;font-weight:400;letter-spacing:0.463px;">100</span>
<span style="left:446.3px;top:120.2px;height:14px;line-height:14px;font-size:10.7px;color:#b4b4b4;font-weight:400;letter-spacing:0.463px;">200</span>
<span style="left:513.0px;top:120.2px;height:14px;line-height:14px;font-size:10.7px;color:#b4b4b4;font-weight:400;letter-spacing:0.463px;">300</span>
<span style="left:579.7px;top:120.2px;height:14px;line-height:14px;font-size:10.7px;color:#b4b4b4;font-weight:400;letter-spacing:0.463px;">400</span>
<span style="left:646.3px;top:120.2px;height:14px;line-height:14px;font-size:10.7px;color:#b4b4b4;font-weight:400;letter-spacing:0.463px;">500</span>
<span style="left:713.0px;top:120.2px;height:14px;line-height:14px;font-size:10.7px;color:#b4b4b4;font-weight:400;letter-spacing:0.463px;">600</span>
<span style="left:779.7px;top:120.2px;height:14px;line-height:14px;font-size:10.7px;color:#b4b4b4;font-weight:400;letter-spacing:0.463px;">700</span>
<span style="left:846.3px;top:120.2px;height:14px;line-height:14px;font-size:10.7px;color:#b4b4b4;font-weight:400;letter-spacing:0.463px;">800</span>
<span style="left:913.0px;top:120.2px;height:14px;line-height:14px;font-size:10.7px;color:#b4b4b4;font-weight:400;letter-spacing:0.463px;">900</span>
<span style="left:979.7px;top:120.2px;height:14px;line-height:14px;font-size:10.7px;color:#b4b4b4;font-weight:400;letter-spacing:0.491px;">1000</span>
<span style="left:1046.3px;top:120.2px;height:14px;line-height:14px;font-size:10.7px;color:#b4b4b4;font-weight:400;letter-spacing:0.719px;">1100</span>
<span style="left:1113.0px;top:120.2px;height:14px;line-height:14px;font-size:10.7px;color:#b4b4b4;font-weight:400;letter-spacing:0.491px;">1200</span>
<span style="left:1179.7px;top:120.2px;height:14px;line-height:14px;font-size:10.7px;color:#b4b4b4;font-weight:400;letter-spacing:0.491px;">1300</span>
<svg style="left:46px;top:115px;overflow:hidden;" width="1176" height="21" viewBox="0 0 1176 21"><path d="M64.5 0V21" stroke="#6a6a6a" stroke-width="1"/><path d="M131.2 0V21" stroke="#6a6a6a" stroke-width="1"/><path d="M197.8 0V21" stroke="#6a6a6a" stroke-width="1"/><path d="M264.5 0V21" stroke="#6a6a6a" stroke-width="1"/><path d="M331.2 0V21" stroke="#6a6a6a" stroke-width="1"/><path d="M397.8 0V21" stroke="#6a6a6a" stroke-width="1"/><path d="M464.5 0V21" stroke="#6a6a6a" stroke-width="1"/><path d="M531.2 0V21" stroke="#6a6a6a" stroke-width="1"/><path d="M597.8 0V21" stroke="#6a6a6a" stroke-width="1"/><path d="M664.5 0V21" stroke="#6a6a6a" stroke-width="1"/><path d="M731.2 0V21" stroke="#6a6a6a" stroke-width="1"/><path d="M797.8 0V21" stroke="#6a6a6a" stroke-width="1"/><path d="M864.5 0V21" stroke="#6a6a6a" stroke-width="1"/><path d="M931.2 0V21" stroke="#6a6a6a" stroke-width="1"/><path d="M997.8 0V21" stroke="#6a6a6a" stroke-width="1"/><path d="M1064.5 0V21" stroke="#6a6a6a" stroke-width="1"/><path d="M1131.2 0V21" stroke="#6a6a6a" stroke-width="1"/><path d="M24.5 19.5V21M31.2 17V21M37.8 19.5V21M44.5 19.5V21M51.2 19.5V21M57.8 19.5V21M71.2 19.5V21M77.8 19.5V21M84.5 19.5V21M91.2 19.5V21M97.8 17V21M104.5 19.5V21M111.2 19.5V21M117.8 19.5V21M124.5 19.5V21M137.8 19.5V21M144.5 19.5V21M151.2 19.5V21M157.8 19.5V21M164.5 17V21M171.2 19.5V21M177.8 19.5V21M184.5 19.5V21M191.2 19.5V21M204.5 19.5V21M211.2 19.5V21M217.8 19.5V21M224.5 19.5V21M231.2 17V21M237.8 19.5V21M244.5 19.5V21M251.2 19.5V21M257.8 19.5V21M271.2 19.5V21M277.8 19.5V21M284.5 19.5V21M291.2 19.5V21M297.8 17V21M304.5 19.5V21M311.2 19.5V21M317.8 19.5V21M324.5 19.5V21M337.8 19.5V21M344.5 19.5V21M351.2 19.5V21M357.8 19.5V21M364.5 17V21M371.2 19.5V21M377.8 19.5V21M384.5 19.5V21M391.2 19.5V21M404.5 19.5V21M411.2 19.5V21M417.8 19.5V21M424.5 19.5V21M431.2 17V21M437.8 19.5V21M444.5 19.5V21M451.2 19.5V21M457.8 19.5V21M471.2 19.5V21M477.8 19.5V21M484.5 19.5V21M491.2 19.5V21M497.8 17V21M504.5 19.5V21M511.2 19.5V21M517.8 19.5V21M524.5 19.5V21M537.8 19.5V21M544.5 19.5V21M551.2 19.5V21M557.8 19.5V21M564.5 17V21M571.2 19.5V21M577.8 19.5V21M584.5 19.5V21M591.2 19.5V21M604.5 19.5V21M611.2 19.5V21M617.8 19.5V21M624.5 19.5V21M631.2 17V21M637.8 19.5V21M644.5 19.5V21M651.2 19.5V21M657.8 19.5V21M671.2 19.5V21M677.8 19.5V21M684.5 19.5V21M691.2 19.5V21M697.8 17V21M704.5 19.5V21M711.2 19.5V21M717.8 19.5V21M724.5 19.5V21M737.8 19.5V21M744.5 19.5V21M751.2 19.5V21M757.8 19.5V21M764.5 17V21M771.2 19.5V21M777.8 19.5V21M784.5 19.5V21M791.2 19.5V21M804.5 19.5V21M811.2 19.5V21M817.8 19.5V21M824.5 19.5V21M831.2 17V21M837.8 19.5V21M844.5 19.5V21M851.2 19.5V21M857.8 19.5V21M871.2 19.5V21M877.8 19.5V21M884.5 19.5V21M891.2 19.5V21M897.8 17V21M904.5 19.5V21M911.2 19.5V21M917.8 19.5V21M924.5 19.5V21M937.8 19.5V21M944.5 19.5V21M951.2 19.5V21M957.8 19.5V21M964.5 17V21M971.2 19.5V21M977.8 19.5V21M984.5 19.5V21M991.2 19.5V21M1004.5 19.5V21M1011.2 19.5V21M1017.8 19.5V21M1024.5 19.5V21M1031.2 17V21M1037.8 19.5V21M1044.5 19.5V21M1051.2 19.5V21M1057.8 19.5V21M1071.2 19.5V21M1077.8 19.5V21M1084.5 19.5V21M1091.2 19.5V21M1097.8 17V21M1104.5 19.5V21M1111.2 19.5V21M1117.8 19.5V21M1124.5 19.5V21M1137.8 19.5V21M1144.5 19.5V21M1151.2 19.5V21M1157.8 19.5V21M1164.5 17V21M1171.2 19.5V21" stroke="#757575" stroke-width="1"/></svg>
<div style="left:546px;top:117px;width:2px;height:16px;background:#e6e6e6;"></div>
<span style="left:53.8px;top:163.6px;height:14px;line-height:14px;font-size:10.7px;color:#b4b4b4;font-weight:400;letter-spacing:-0.153px;">1</span>
<span style="left:53.8px;top:175.1px;height:14px;line-height:14px;font-size:10.7px;color:#b4b4b4;font-weight:400;letter-spacing:-0.153px;">0</span>
<span style="left:53.8px;top:186.6px;height:14px;line-height:14px;font-size:10.7px;color:#b4b4b4;font-weight:400;letter-spacing:-0.153px;">0</span>
<span style="left:53.8px;top:231.3px;height:14px;line-height:14px;font-size:10.7px;color:#b4b4b4;font-weight:400;letter-spacing:-0.153px;">0</span>
<span style="left:53.8px;top:297px;height:14px;line-height:14px;font-size:10.7px;color:#b4b4b4;font-weight:400;letter-spacing:-0.153px;">1</span>
<span style="left:53.8px;top:308.5px;height:14px;line-height:14px;font-size:10.7px;color:#b4b4b4;font-weight:400;letter-spacing:-0.153px;">0</span>
<span style="left:53.8px;top:320px;height:14px;line-height:14px;font-size:10.7px;color:#b4b4b4;font-weight:400;letter-spacing:-0.153px;">0</span>
<span style="left:53.8px;top:363.6px;height:14px;line-height:14px;font-size:10.7px;color:#b4b4b4;font-weight:400;letter-spacing:-0.153px;">2</span>
<span style="left:53.8px;top:375.1px;height:14px;line-height:14px;font-size:10.7px;color:#b4b4b4;font-weight:400;letter-spacing:-0.153px;">0</span>
<span style="left:53.8px;top:386.6px;height:14px;line-height:14px;font-size:10.7px;color:#b4b4b4;font-weight:400;letter-spacing:-0.153px;">0</span>
<span style="left:53.8px;top:430.3px;height:14px;line-height:14px;font-size:10.7px;color:#b4b4b4;font-weight:400;letter-spacing:-0.153px;">3</span>
<span style="left:53.8px;top:441.8px;height:14px;line-height:14px;font-size:10.7px;color:#b4b4b4;font-weight:400;letter-spacing:-0.153px;">0</span>
<span style="left:53.8px;top:453.3px;height:14px;line-height:14px;font-size:10.7px;color:#b4b4b4;font-weight:400;letter-spacing:-0.153px;">0</span>
<span style="left:53.8px;top:497px;height:14px;line-height:14px;font-size:10.7px;color:#b4b4b4;font-weight:400;letter-spacing:-0.153px;">4</span>
<span style="left:53.8px;top:508.5px;height:14px;line-height:14px;font-size:10.7px;color:#b4b4b4;font-weight:400;letter-spacing:-0.153px;">0</span>
<span style="left:53.8px;top:520px;height:14px;line-height:14px;font-size:10.7px;color:#b4b4b4;font-weight:400;letter-spacing:-0.153px;">0</span>
<span style="left:53.8px;top:563.6px;height:14px;line-height:14px;font-size:10.7px;color:#b4b4b4;font-weight:400;letter-spacing:-0.153px;">5</span>
<span style="left:53.8px;top:575.1px;height:14px;line-height:14px;font-size:10.7px;color:#b4b4b4;font-weight:400;letter-spacing:-0.153px;">0</span>
<span style="left:53.8px;top:586.6px;height:14px;line-height:14px;font-size:10.7px;color:#b4b4b4;font-weight:400;letter-spacing:-0.153px;">0</span>
<span style="left:53.8px;top:630.3px;height:14px;line-height:14px;font-size:10.7px;color:#b4b4b4;font-weight:400;letter-spacing:-0.153px;">6</span>
<span style="left:53.8px;top:641.8px;height:14px;line-height:14px;font-size:10.7px;color:#b4b4b4;font-weight:400;letter-spacing:-0.153px;">0</span>
<span style="left:53.8px;top:653.3px;height:14px;line-height:14px;font-size:10.7px;color:#b4b4b4;font-weight:400;letter-spacing:-0.153px;">0</span>
<span style="left:53.8px;top:697px;height:14px;line-height:14px;font-size:10.7px;color:#b4b4b4;font-weight:400;letter-spacing:-0.153px;">7</span>
<span style="left:53.8px;top:708.5px;height:14px;line-height:14px;font-size:10.7px;color:#b4b4b4;font-weight:400;letter-spacing:-0.153px;">0</span>
<span style="left:53.8px;top:720px;height:14px;line-height:14px;font-size:10.7px;color:#b4b4b4;font-weight:400;letter-spacing:-0.153px;">0</span>
<span style="left:53.8px;top:763.6px;height:14px;line-height:14px;font-size:10.7px;color:#b4b4b4;font-weight:400;letter-spacing:-0.153px;">8</span>
<span style="left:53.8px;top:775.1px;height:14px;line-height:14px;font-size:10.7px;color:#b4b4b4;font-weight:400;letter-spacing:-0.153px;">0</span>
<span style="left:53.8px;top:786.6px;height:14px;line-height:14px;font-size:10.7px;color:#b4b4b4;font-weight:400;letter-spacing:-0.153px;">0</span>
<span style="left:53.8px;top:830.3px;height:14px;line-height:14px;font-size:10.7px;color:#b4b4b4;font-weight:400;letter-spacing:-0.153px;">9</span>
<span style="left:53.8px;top:841.8px;height:14px;line-height:14px;font-size:10.7px;color:#b4b4b4;font-weight:400;letter-spacing:-0.153px;">0</span>
<span style="left:53.8px;top:853.3px;height:14px;line-height:14px;font-size:10.7px;color:#b4b4b4;font-weight:400;letter-spacing:-0.153px;">0</span>
<span style="left:53.8px;top:897px;height:14px;line-height:14px;font-size:10.7px;color:#b4b4b4;font-weight:400;letter-spacing:-0.153px;">1</span>
<span style="left:53.8px;top:908.5px;height:14px;line-height:14px;font-size:10.7px;color:#b4b4b4;font-weight:400;letter-spacing:-0.153px;">0</span>
<span style="left:53.8px;top:920px;height:14px;line-height:14px;font-size:10.7px;color:#b4b4b4;font-weight:400;letter-spacing:-0.153px;">0</span>
<span style="left:53.8px;top:931.5px;height:14px;line-height:14px;font-size:10.7px;color:#b4b4b4;font-weight:400;letter-spacing:-0.153px;">0</span>
<span style="left:53.8px;top:963.6px;height:14px;line-height:14px;font-size:10.7px;color:#b4b4b4;font-weight:400;letter-spacing:-0.153px;">1</span>
<span style="left:53.8px;top:975.1px;height:14px;line-height:14px;font-size:10.7px;color:#b4b4b4;font-weight:400;letter-spacing:-0.153px;">1</span>
<span style="left:53.8px;top:986.6px;height:14px;line-height:14px;font-size:10.7px;color:#b4b4b4;font-weight:400;letter-spacing:-0.153px;">0</span>
<svg style="left:46px;top:136px;overflow:hidden;" width="21" height="857" viewBox="0 0 21 857"><path d="M0 28.3H21" stroke="#6a6a6a" stroke-width="1"/><path d="M0 95.0H21" stroke="#6a6a6a" stroke-width="1"/><path d="M0 161.7H21" stroke="#6a6a6a" stroke-width="1"/><path d="M0 228.3H21" stroke="#6a6a6a" stroke-width="1"/><path d="M0 295.0H21" stroke="#6a6a6a" stroke-width="1"/><path d="M0 361.7H21" stroke="#6a6a6a" stroke-width="1"/><path d="M0 428.3H21" stroke="#6a6a6a" stroke-width="1"/><path d="M0 495.0H21" stroke="#6a6a6a" stroke-width="1"/><path d="M0 561.7H21" stroke="#6a6a6a" stroke-width="1"/><path d="M0 628.3H21" stroke="#6a6a6a" stroke-width="1"/><path d="M0 695.0H21" stroke="#6a6a6a" stroke-width="1"/><path d="M0 761.7H21" stroke="#6a6a6a" stroke-width="1"/><path d="M0 828.3H21" stroke="#6a6a6a" stroke-width="1"/><path d="M19.5 8.3H21M19.5 15.0H21M19.5 21.7H21M19.5 35.0H21M19.5 41.7H21M19.5 48.3H21M19.5 55.0H21M17 61.7H21M19.5 68.3H21M19.5 75.0H21M19.5 81.7H21M19.5 88.3H21M19.5 101.7H21M19.5 108.3H21M19.5 115.0H21M19.5 121.7H21M17 128.3H21M19.5 135.0H21M19.5 141.7H21M19.5 148.3H21M19.5 155.0H21M19.5 168.3H21M19.5 175.0H21M19.5 181.7H21M19.5 188.3H21M17 195.0H21M19.5 201.7H21M19.5 208.3H21M19.5 215.0H21M19.5 221.7H21M19.5 235.0H21M19.5 241.7H21M19.5 248.3H21M19.5 255.0H21M17 261.7H21M19.5 268.3H21M19.5 275.0H21M19.5 281.7H21M19.5 288.3H21M19.5 301.7H21M19.5 308.3H21M19.5 315.0H21M19.5 321.7H21M17 328.3H21M19.5 335.0H21M19.5 341.7H21M19.5 348.3H21M19.5 355.0H21M19.5 368.3H21M19.5 375.0H21M19.5 381.7H21M19.5 388.3H21M17 395.0H21M19.5 401.7H21M19.5 408.3H21M19.5 415.0H21M19.5 421.7H21M19.5 435.0H21M19.5 441.7H21M19.5 448.3H21M19.5 455.0H21M17 461.7H21M19.5 468.3H21M19.5 475.0H21M19.5 481.7H21M19.5 488.3H21M19.5 501.7H21M19.5 508.3H21M19.5 515.0H21M19.5 521.7H21M17 528.3H21M19.5 535.0H21M19.5 541.7H21M19.5 548.3H21M19.5 555.0H21M19.5 568.3H21M19.5 575.0H21M19.5 581.7H21M19.5 588.3H21M17 595.0H21M19.5 601.7H21M19.5 608.3H21M19.5 615.0H21M19.5 621.7H21M19.5 635.0H21M19.5 641.7H21M19.5 648.3H21M19.5 655.0H21M17 661.7H21M19.5 668.3H21M19.5 675.0H21M19.5 681.7H21M19.5 688.3H21M19.5 701.7H21M19.5 708.3H21M19.5 715.0H21M19.5 721.7H21M17 728.3H21M19.5 735.0H21M19.5 741.7H21M19.5 748.3H21M19.5 755.0H21M19.5 768.3H21M19.5 775.0H21M19.5 781.7H21M19.5 788.3H21M17 795.0H21M19.5 801.7H21M19.5 808.3H21M19.5 815.0H21M19.5 821.7H21M19.5 835.0H21M19.5 841.7H21M19.5 848.3H21M19.5 855.0H21" stroke="#757575" stroke-width="1"/></svg>
<div style="left:46px;top:115px;width:21px;height:21px;background:#4c4c4c;"></div>
<svg style="left:46px;top:115px;" width="21" height="21" viewBox="0 0 21 21"><path d="M14.5 1V21M1 14.5H21" stroke="#808080" stroke-width="1" stroke-dasharray="1 1.6"/></svg>
<svg style="left:1227px;top:123px;" width="11" height="7" viewBox="0 0 11 7"><path d="M0.5 6L5.5 1L10.5 6" stroke="#8f8f8f" stroke-width="1.2" fill="none"/></svg>
<svg style="left:1227px;top:976px;" width="11" height="7" viewBox="0 0 11 7"><path d="M0.5 1L5.5 6L10.5 1" stroke="#a8a8a8" stroke-width="1.2" fill="none"/></svg>
<svg style="left:345px;top:997px;" width="6" height="10" viewBox="0 0 6 10"><path d="M5 0.5L1 5L5 9.5" stroke="#8f8f8f" stroke-width="1.2" fill="none"/></svg>
<svg style="left:1207px;top:997px;" width="6" height="10" viewBox="0 0 6 10"><path d="M1 0.5L5 5L1 9.5" stroke="#a8a8a8" stroke-width="1.2" fill="none"/></svg>
<svg style="left:322px;top:997px;" width="6" height="11" viewBox="0 0 6 11"><path d="M1 0.5L5 5.5L1 10.5" stroke="#c8c8c8" stroke-width="1.2" fill="none"/></svg>
<div style="left:46px;top:993px;width:62px;height:17px;background:#464646;"></div>
<span style="left:50px;top:992.7px;height:21px;line-height:21px;font-size:16px;color:#e4e4e4;font-weight:400;letter-spacing:-0.230px;">66.67%</span>
<span style="left:121px;top:994.5px;height:16px;line-height:16px;font-size:12.5px;color:#cfcfcf;font-weight:400;letter-spacing:0.039px;">1003 пикс. x 998 пикс. (120 ppi)</span>
<svg style="left:1278px;top:83px;" width="8" height="6" viewBox="0 0 8 6"><path d="M3 0.5L0.5 3L3 5.5M7 0.5L4.5 3L7 5.5" stroke="#d0d0d0" stroke-width="1.1" fill="none"/></svg>
<svg style="left:1697px;top:83px;" width="8" height="6" viewBox="0 0 8 6"><path d="M0.5 0.5L3 3L0.5 5.5M4.5 0.5L7 3L4.5 5.5" stroke="#d0d0d0" stroke-width="1.1" fill="none"/></svg>
<div style="left:1256px;top:98px;width:25px;height:5px;background:repeating-linear-gradient(90deg,#3c3c3c 0 1.3px,transparent 1.3px 2.5px);"></div>
<svg style="left:1258px;top:111px;" width="20" height="23" viewBox="0 0 20 23"><rect x="1.4" y="1.6" width="4.8" height="4.6" stroke="#d6d6d6" fill="none" stroke-width="1.2"/><rect x="1.4" y="9.1" width="4.8" height="4.6" stroke="#d6d6d6" fill="none" stroke-width="1.2"/><rect x="0.8" y="16.2" width="6" height="5.8" fill="#d6d6d6"/><path d="M10 5.4L17.8 2.6L14.8 10.4Z" fill="#d6d6d6"/><path d="M16.4 5C20 10 19.2 17 11.2 20.4C15.6 17 16.6 12 13.8 8Z" fill="#d6d6d6"/></svg>
<svg style="left:1257px;top:147px;" width="21" height="21" viewBox="0 0 21 21"><path d="M3 0.8H17.8C18.9 0.8 19.8 1.7 19.8 2.8V12.7C19.8 13.8 18.9 14.7 17.8 14.7H10.7L4.8 19.8L4.2 14.7H3C1.9 14.7 1 13.8 1 12.7V2.8C1 1.7 1.9 0.8 3 0.8Z" fill="#d6d6d6"/></svg>
<div style="left:1295px;top:94px;width:411px;height:34px;background:#424242;"></div>
<div style="left:1295px;top:128px;width:411px;height:1px;background:#3c3c3c;"></div>
<div style="left:1295px;top:94px;width:52px;height:35px;background:#535353;"></div>
<div style="left:1347px;top:94px;width:1px;height:34px;background:#3c3c3c;"></div>
<span style="left:1306px;top:101px;height:17px;line-height:17px;font-size:13px;color:#f2f2f2;font-weight:700;letter-spacing:0.071px;">Цвет</span>
<div style="left:1424px;top:94px;width:1px;height:34px;background:#3c3c3c;"></div>
<span style="left:1358px;top:101px;height:17px;line-height:17px;font-size:13px;color:#a6a6a6;font-weight:700;letter-spacing:-0.466px;">Образцы</span>
<div style="left:1513px;top:94px;width:1px;height:34px;background:#3c3c3c;"></div>
<span style="left:1436px;top:101px;height:17px;line-height:17px;font-size:13px;color:#a6a6a6;font-weight:700;letter-spacing:-0.511px;">Градиенты</span>
<div style="left:1575px;top:94px;width:1px;height:34px;background:#3c3c3c;"></div>
<span style="left:1525px;top:101px;height:17px;line-height:17px;font-size:13px;color:#a6a6a6;font-weight:700;letter-spacing:-0.125px;">Узоры</span>
<svg style="left:1696px;top:106.5px;" width="10" height="8" viewBox="0 0 10 8"><path d="M0 0.5H10M0 2.65H10M0 4.8H10M0 6.95H10" stroke="#c4c4c4" stroke-width="1"/></svg>
<div style="left:1348px;top:94px;width:358px;height:2px;background:#3c3c3c;"></div>
<div style="left:1319px;top:154px;width:24px;height:24px;background:#e8faff;border:1px solid #dadada;"></div>
<div style="left:1305px;top:140px;width:28px;height:28px;background:#8f8f8f;"></div>
<div style="left:1308px;top:143px;width:22px;height:22px;background:#9b97b3;border:1px solid #f4f4f4;box-shadow:0 0 0 1px #2a2a2a;"></div>
<div style="left:1351px;top:137px;width:296px;height:233px;background:linear-gradient(to bottom,rgba(0,0,0,0) 0%,rgba(0,0,0,.19) 25%,rgba(0,0,0,.44) 50%,rgba(0,0,0,.71) 75%,rgba(0,0,0,.98) 100%),linear-gradient(to right,#fdfdfd 0%,#c2b6f6 25%,#8e7cf2 50%,#6048ee 75%,#3a14f0 100%);"></div>
<svg style="left:1384px;top:202px;" width="16" height="16" viewBox="0 0 16 16"><circle cx="8" cy="8" r="6.5" stroke="#111" stroke-width="1.2" fill="none"/></svg>
<div style="left:1668px;top:137px;width:24px;height:233px;background:linear-gradient(to bottom,#f00 0%,#f0f 16.7%,#00f 33.3%,#0ff 50%,#0f0 66.7%,#ff0 83.3%,#f00 100%);"></div>
<svg style="left:1656px;top:205px;" width="9" height="9" viewBox="0 0 9 9"><path d="M0.5 1.5C0.5 0.9 0.9 0.5 1.5 0.5H4L8.5 4.5L4 8.5H1.5C0.9 8.5 0.5 8.1 0.5 7.5Z" fill="#e6e6e6"/></svg>
<div style="left:1295px;top:397px;width:411px;height:3px;background:#3c3c3c;"></div>
<div style="left:1295px;top:400px;width:411px;height:35px;background:#424242;"></div>
<div style="left:1295px;top:435px;width:411px;height:1px;background:#3c3c3c;"></div>
<div style="left:1295px;top:400px;width:78px;height:36px;background:#535353;"></div>
<div style="left:1373px;top:400px;width:1px;height:35px;background:#3c3c3c;"></div>
<span style="left:1306.5px;top:407.5px;height:17px;line-height:17px;font-size:13px;color:#f2f2f2;font-weight:700;letter-spacing:-0.773px;">Свойства</span>
<div style="left:1462px;top:400px;width:1px;height:35px;background:#3c3c3c;"></div>
<span style="left:1384.5px;top:407.5px;height:17px;line-height:17px;font-size:13px;color:#a6a6a6;font-weight:700;letter-spacing:-0.184px;">Коррекция</span>
<div style="left:1558px;top:400px;width:1px;height:35px;background:#3c3c3c;"></div>
<span style="left:1474px;top:407.5px;height:17px;line-height:17px;font-size:13px;color:#a6a6a6;font-weight:700;letter-spacing:-0.423px;">Библиотеки</span>
<svg style="left:1696px;top:413.0px;" width="10" height="8" viewBox="0 0 10 8"><path d="M0 0.5H10M0 2.65H10M0 4.8H10M0 6.95H10" stroke="#c4c4c4" stroke-width="1"/></svg>
<div style="left:1308px;top:444px;width:28px;height:27px;background:#3a3a3a;border-radius:3px;"></div>
<svg style="left:1313px;top:449px;" width="18" height="16" viewBox="0 0 18 16"><rect x="0.75" y="0.75" width="16.5" height="14.5" stroke="#d6d6d6" fill="none" stroke-width="1.5"/><path d="M2.5 13V9L4.5 9V7H6.5V9H8V6H10V8H12V10H14V8H15.5V13Z" fill="#d6d6d6"/><rect x="11.5" y="3.5" width="3" height="2.5" fill="#d6d6d6"/></svg>
<span style="left:1344.5px;top:450px;height:17px;line-height:17px;font-size:13px;color:#dddddd;font-weight:400;letter-spacing:-0.463px;">Пиксельный слой</span>
<div style="left:1295px;top:477px;width:397px;height:1px;background:#484848;"></div>
<div style="left:1692px;top:479px;width:14px;height:196px;background:#4a4a4a;"></div>
<div style="left:1695px;top:500px;width:11px;height:68px;background:#6a6a6a;"></div>
<svg style="left:1697px;top:485px;" width="8" height="5" viewBox="0 0 8 5"><path d="M0.5 4.5L4 1L7.5 4.5" stroke="#9a9a9a" stroke-width="1.1" fill="none"/></svg>
<svg style="left:1697px;top:660px;" width="8" height="5" viewBox="0 0 8 5"><path d="M0.5 0.5L4 4L7.5 0.5" stroke="#9a9a9a" stroke-width="1.1" fill="none"/></svg>
<svg style="left:1304px;top:494px;" width="11" height="7" viewBox="0 0 11 7"><path d="M0.5 0.5L5.5 5.5L10.5 0.5" stroke="#c8c8c8" stroke-width="1.2" fill="none"/></svg>
<span style="left:1326px;top:489.5px;height:17px;line-height:17px;font-size:13px;color:#f0f0f0;font-weight:700;letter-spacing:-0.262px;">Перспектива</span>
<div style="left:1306px;top:528px;width:30px;height:30px;background:#3a3a3a;border-radius:3px;"></div>
<svg style="left:1316px;top:534px;" width="10" height="18" viewBox="0 0 10 18"><rect x="1.2" y="1" width="7.6" height="8.5" rx="3.6" stroke="#d6d6d6" fill="none" stroke-width="1.5"/><rect x="1.2" y="8.5" width="7.6" height="8.5" rx="3.6" stroke="#d6d6d6" fill="none" stroke-width="1.5"/><path d="M5 5.5V12.5" stroke="#d6d6d6" fill="none" stroke-width="1.4"/></svg>
<span style="left:1350px;top:518.5px;height:17px;line-height:17px;font-size:13px;color:#dddddd;font-weight:400;letter-spacing:0.078px;">Ш</span>
<div style="left:1369px;top:517px;width:67px;height:21px;background:#484848;border:1px solid #6a6a6a;border-radius:2px;"></div>
<span style="left:1374.5px;top:519px;height:17px;line-height:17px;font-size:13px;color:#e6e6e6;font-weight:400;letter-spacing:-0.197px;">1000 пикс</span>
<span style="left:1473.5px;top:518.5px;height:17px;line-height:17px;font-size:13px;color:#dddddd;font-weight:400;letter-spacing:-0.172px;">X</span>
<div style="left:1489px;top:517px;width:67px;height:21px;background:#484848;border:1px solid #6a6a6a;border-radius:2px;"></div>
<span style="left:1495.5px;top:519px;height:17px;line-height:17px;font-size:13px;color:#e6e6e6;font-weight:400;letter-spacing:-0.168px;">3 пикс.</span>
<span style="left:1355px;top:550px;height:16px;line-height:16px;font-size:12px;color:#dddddd;font-weight:400;letter-spacing:-0.516px;">В</span>
<div style="left:1369px;top:548px;width:67px;height:21px;background:#484848;border:1px solid #6a6a6a;border-radius:2px;"></div>
<span style="left:1374.5px;top:550px;height:17px;line-height:17px;font-size:13px;color:#e6e6e6;font-weight:400;letter-spacing:-0.125px;">774 пикс.</span>
<span style="left:1473.5px;top:549.5px;height:17px;line-height:17px;font-size:13px;color:#dddddd;font-weight:400;letter-spacing:-0.172px;">Y</span>
<div style="left:1489px;top:548px;width:67px;height:21px;background:#484848;border:1px solid #6a6a6a;border-radius:2px;"></div>
<span style="left:1495.5px;top:550px;height:17px;line-height:17px;font-size:13px;color:#e6e6e6;font-weight:400;letter-spacing:-0.125px;">127 пикс.</span>
<svg style="left:1346px;top:588px;" width="17" height="12" viewBox="0 0 17 12"><path d="M1 10.5H15.5M1 10.5L12 1M8.5 10.5C8.5 8 7.5 6.3 6.2 5.2" stroke="#cfcfcf" stroke-width="1.3" fill="none"/></svg>
<div style="left:1370px;top:584px;width:67px;height:20px;background:#484848;border:1px dotted #777;border-radius:2px;"></div>
<div style="left:1418px;top:585px;width:1px;height:18px;background:#6a6a6a;"></div>
<span style="left:1374.5px;top:585.5px;height:17px;line-height:17px;font-size:13px;color:#e6e6e6;font-weight:400;letter-spacing:-0.003px;">0,00°</span>
<svg style="left:1424px;top:592px;" width="9" height="5" viewBox="0 0 9 5"><path d="M0.5 0.5L4.5 4.5L8.5 0.5" stroke="#c8c8c8" stroke-width="1.2" fill="none"/></svg>
<svg style="left:1494px;top:587px;" width="22" height="15" viewBox="0 0 22 15"><path d="M1 1.5L7 7.5L1 13.5Z" stroke="#d6d6d6" fill="none" stroke-width="1.3"/><path d="M21 1.5L15 7.5L21 13.5Z" fill="#d6d6d6"/><path d="M11 0V15" stroke="#d6d6d6" fill="none" stroke-width="1.2" stroke-dasharray="1.2 1.6"/></svg>
<svg style="left:1531px;top:583px;" width="17" height="22" viewBox="0 0 17 22"><path d="M2 1L8.5 7L15 1Z" stroke="#d6d6d6" fill="none" stroke-width="1.3"/><path d="M2 21L8.5 15L15 21Z" fill="#d6d6d6"/><path d="M0 11H17" stroke="#d6d6d6" fill="none" stroke-width="1.2" stroke-dasharray="1.2 1.6"/></svg>
<div style="left:1295px;top:623px;width:397px;height:1px;background:#484848;"></div>
<svg style="left:1304px;top:640px;" width="11" height="7" viewBox="0 0 11 7"><path d="M0.5 0.5L5.5 5.5L10.5 0.5" stroke="#c8c8c8" stroke-width="1.2" fill="none"/></svg>
<span style="left:1328.5px;top:635.5px;height:17px;line-height:17px;font-size:13px;color:#f0f0f0;font-weight:700;letter-spacing:-0.400px;">Выровнять и распределить</span>
<span style="left:1307px;top:662px;height:16px;line-height:16px;font-size:12.5px;color:#dddddd;font-weight:400;letter-spacing:-0.342px;">Выровнять:</span>
<div style="left:1295px;top:708px;width:411px;height:3px;background:#3c3c3c;"></div>
<div style="left:1295px;top:711px;width:411px;height:35px;background:#424242;"></div>
<div style="left:1295px;top:746px;width:411px;height:1px;background:#3c3c3c;"></div>
<div style="left:1295px;top:711px;width:53px;height:36px;background:#535353;"></div>
<div style="left:1348px;top:711px;width:1px;height:35px;background:#3c3c3c;"></div>
<span style="left:1307px;top:718.5px;height:17px;line-height:17px;font-size:13px;color:#f2f2f2;font-weight:700;letter-spacing:-0.978px;">Слои</span>
<div style="left:1417px;top:711px;width:1px;height:35px;background:#3c3c3c;"></div>
<span style="left:1359.5px;top:718.5px;height:17px;line-height:17px;font-size:13px;color:#a6a6a6;font-weight:700;letter-spacing:-0.594px;">Каналы</span>
<div style="left:1494px;top:711px;width:1px;height:35px;background:#3c3c3c;"></div>
<span style="left:1429.5px;top:718.5px;height:17px;line-height:17px;font-size:13px;color:#a6a6a6;font-weight:700;letter-spacing:-0.466px;">Контуры</span>
<svg style="left:1696px;top:724.0px;" width="10" height="8" viewBox="0 0 10 8"><path d="M0 0.5H10M0 2.65H10M0 4.8H10M0 6.95H10" stroke="#c4c4c4" stroke-width="1"/></svg>
<div style="left:1300px;top:758px;width:149px;height:25px;background:#454545;border:1px solid #5e5e5e;border-radius:3px;"></div>
<svg style="left:1310px;top:763px;" width="13" height="13" viewBox="0 0 13 13"><circle cx="5" cy="5" r="3.8" stroke="#d6d6d6" fill="none" stroke-width="1.6"/><path d="M7.8 7.8L12 12" stroke="#d6d6d6" fill="none" stroke-width="2"/></svg>
<span style="left:1327.5px;top:762.5px;height:16px;line-height:16px;font-size:12.2px;color:#dddddd;font-weight:400;letter-spacing:-0.625px;">Вид</span>
<svg style="left:1436px;top:769px;" width="9" height="5" viewBox="0 0 9 5"><path d="M0.5 0.5L4.5 4.5L8.5 0.5" stroke="#c8c8c8" stroke-width="1.2" fill="none"/></svg>
<svg style="left:1506px;top:762px;" width="15" height="12" viewBox="0 0 15 12"><rect x="0.75" y="0.75" width="13.5" height="10.5" stroke="#d6d6d6" fill="none" stroke-width="1.5"/><path d="M2.5 9.5L5.5 5L7.5 7.5L9.5 4L12.5 9.5Z" fill="#d6d6d6"/></svg>
<svg style="left:1535px;top:761px;" width="14" height="14" viewBox="0 0 14 14"><circle cx="7" cy="7" r="6" stroke="#d6d6d6" fill="none" stroke-width="1.5"/><path d="M2.8 11.2A6 6 0 0 0 11.2 2.8Z" fill="#d6d6d6"/></svg>
<svg style="left:1566px;top:761px;" width="13" height="14" viewBox="0 0 13 14"><path d="M0.5 0.5H12.5V4H11.2C11 2.8 10.6 2.3 9.5 2.3H8V11.3C8 12.1 8.4 12.4 9.7 12.5V13.5H3.3V12.5C4.6 12.4 5 12.1 5 11.3V2.3H3.5C2.4 2.3 2 2.8 1.8 4H0.5Z" fill="#d6d6d6"/></svg>
<svg style="left:1595px;top:761px;" width="15" height="14" viewBox="0 0 15 14"><rect x="2.5" y="2.5" width="10" height="9" stroke="#d6d6d6" fill="none" stroke-width="1.4"/><path d="M0.5 0.5H4.5V4.5H0.5ZM10.5 0.5H14.5V4.5H10.5ZM0.5 9.5H4.5V13.5H0.5ZM10.5 9.5H14.5V13.5H10.5Z" fill="#535353" stroke="#d6d6d6" stroke-width="1"/></svg>
<svg style="left:1627px;top:760px;" width="14" height="15" viewBox="0 0 14 15"><path d="M4.5 0.75H9.5L13.25 4.5V14.25H7" stroke="#d6d6d6" fill="none" stroke-width="1.4"/><path d="M9.5 0.75V4.5H13.25" stroke="#d6d6d6" fill="none" stroke-width="1.2"/><rect x="0.5" y="7" width="7" height="7.5" fill="#d6d6d6"/><path d="M4.5 0.75V6" stroke="#d6d6d6" fill="none" stroke-width="1.4"/></svg>
<div style="left:1697px;top:757px;width:14px;height:26px;background:#3e3e3e;border-radius:7px;"></div>
<div style="left:1697px;top:755px;width:12px;height:12px;background:#d8d8d8;border-radius:50%;"></div>
<div style="left:1300px;top:793px;width:228px;height:25px;background:#454545;border:1px solid #5e5e5e;border-radius:3px;"></div>
<span style="left:1310px;top:797px;height:17px;line-height:17px;font-size:13px;color:#dddddd;font-weight:400;letter-spacing:-0.683px;">Обычные</span>
<svg style="left:1515px;top:803px;" width="9" height="5" viewBox="0 0 9 5"><path d="M0.5 0.5L4.5 4.5L8.5 0.5" stroke="#c8c8c8" stroke-width="1.2" fill="none"/></svg>
<span style="left:1539.5px;top:796.5px;height:16px;line-height:16px;font-size:12.5px;color:#dddddd;font-weight:400;letter-spacing:0.020px;">Непрозрачность:</span>
<div style="left:1643px;top:794px;width:44px;height:19px;background:#484848;border:1px solid #606060;"></div>
<span style="left:1648.5px;top:794.5px;height:17px;line-height:17px;font-size:13px;color:#e6e6e6;font-weight:400;letter-spacing:-0.214px;">100%</span>
<div style="left:1687px;top:794px;width:19px;height:19px;background:#484848;border:1px solid #606060;border-left:none;"></div>
<svg style="left:1693px;top:802px;" width="9" height="5" viewBox="0 0 9 5"><path d="M0.5 0.5L4.5 4.5L8.5 0.5" stroke="#c8c8c8" stroke-width="1.2" fill="none"/></svg>
<span style="left:1303px;top:830.5px;height:16px;line-height:16px;font-size:12.5px;color:#dddddd;font-weight:400;letter-spacing:-0.036px;">Закрепить:</span>
<svg style="left:1379px;top:831px;" width="15" height="15" viewBox="0 0 15 15"><rect x="0.5" y="0.5" width="14" height="14" stroke="#d6d6d6" fill="none" stroke-width="1"/><path d="M1 1H5.3V5.3H1ZM9.7 1H14V5.3H9.7ZM5.3 5.3H9.7V9.7H5.3ZM1 9.7H5.3V14H1ZM9.7 9.7H14V14H9.7Z" fill="#d6d6d6"/></svg>
<svg style="left:1406px;top:830px;" width="18" height="17" viewBox="0 0 18 17"><path d="M16.5 0.5C17.3 0.9 17.3 1.8 16.7 2.6L10 11.5L7.6 9.4L15 1C15.5 0.4 16 0.3 16.5 0.5Z" fill="#d6d6d6"/><path d="M6.8 10.2L9.2 12.3C9.5 15 6.5 17 1 16.5C3 15.5 3.3 14.3 3.5 13C3.7 11.4 5.2 10.3 6.8 10.2Z" fill="#d6d6d6"/></svg>
<svg style="left:1432px;top:830px;" width="17" height="17" viewBox="0 0 17 17"><path d="M8.5 2.5V14.5M2.5 8.5H14.5" stroke="#d6d6d6" fill="none" stroke-width="1.4"/><path d="M8.5 0L5.8 3.5H11.2ZM8.5 17L5.8 13.5H11.2ZM0 8.5L3.5 5.8V11.2ZM17 8.5L13.5 5.8V11.2Z" fill="#d6d6d6"/></svg>
<svg style="left:1459px;top:830px;" width="19" height="17" viewBox="0 0 19 17"><path d="M4.5 0V13H19M0 4.5H14V17" stroke="#d6d6d6" fill="none" stroke-width="1.6"/><path d="M15 1L18 4" stroke="#d6d6d6" fill="none" stroke-width="1.1" stroke-dasharray="1.2 1.2"/></svg>
<svg style="left:1489px;top:830px;" width="14" height="16" viewBox="0 0 14 16"><rect x="0.5" y="7" width="13" height="9" rx="1" fill="#d6d6d6"/><path d="M3.5 7V4.5C3.5 0.5 10.5 0.5 10.5 4.5V7" stroke="#d6d6d6" fill="none" stroke-width="1.7"/><circle cx="7" cy="11.3" r="1.3" fill="#535353"/></svg>
<span style="left:1587px;top:830.5px;height:16px;line-height:16px;font-size:12.5px;color:#dddddd;font-weight:400;letter-spacing:-0.212px;">Заливка:</span>
<div style="left:1643px;top:829px;width:44px;height:19px;background:#484848;border:1px solid #606060;"></div>
<span style="left:1648.5px;top:829.5px;height:17px;line-height:17px;font-size:13px;color:#e6e6e6;font-weight:400;letter-spacing:-0.214px;">100%</span>
<div style="left:1687px;top:829px;width:19px;height:19px;background:#484848;border:1px solid #606060;border-left:none;"></div>
<svg style="left:1693px;top:837px;" width="9" height="5" viewBox="0 0 9 5"><path d="M0.5 0.5L4.5 4.5L8.5 0.5" stroke="#c8c8c8" stroke-width="1.2" fill="none"/></svg>
<div style="left:1295px;top:858px;width:397px;height:125px;background:#4a4a4a;"></div>
<div style="left:1692px;top:858px;width:14px;height:125px;background:#434343;"></div>
<div style="left:1295px;top:858px;width:38px;height:50px;background:#535353;"></div>
<div style="left:1333px;top:858px;width:359px;height:50px;background:#6b6b6b;"></div>
<div style="left:1295px;top:908px;width:397px;height:1px;background:#3f3f3f;"></div>
<svg style="left:1306px;top:877px;" width="16" height="12" viewBox="0 0 16 12"><path d="M0.5 6C3 2 5.5 0.8 8 0.8C10.5 0.8 13 2 15.5 6C13 10 10.5 11.2 8 11.2C5.5 11.2 3 10 0.5 6Z" fill="#d6d6d6"/><circle cx="8" cy="6" r="3.3" fill="#535353"/><circle cx="8" cy="6" r="1.8" fill="#d6d6d6"/></svg>
<div style="left:1335px;top:861px;width:45px;height:45px;background:#fdfdfd;border:1px solid #fff;box-shadow:inset 0 0 0 1px #222;"></div>
<svg style="left:1338px;top:864px;" width="39" height="39" viewBox="0 0 669 666"><path fill="#000" d="M319.2 341.3C319.6 340.9 321.0 340.2 321.8 338.7C322.6 337.2 323.8 335.1 324.0 332.3C324.2 329.5 323.9 325.6 323.1 322.0C322.3 318.4 321.1 314.5 319.2 310.4C317.3 306.3 314.9 302.4 311.5 297.5C308.1 292.6 302.9 286.2 298.6 280.8C294.3 275.4 289.5 270.2 285.7 265.3C282.0 260.4 278.4 255.5 276.1 251.2C273.9 246.9 273.1 243.6 272.2 239.6C271.3 235.6 271.1 229.4 270.9 227.4C271.5 229.4 272.8 235.6 274.2 239.6C275.6 243.6 276.7 247.1 279.3 251.2C281.9 255.3 285.7 259.3 289.6 264.0C293.5 268.7 298.2 274.4 302.5 279.5C306.8 284.6 311.9 290.2 315.3 294.9C318.7 299.6 321.2 303.9 323.1 307.8C325.0 311.7 325.7 315.1 326.9 318.1C328.1 321.1 329.1 323.9 330.1 325.8C331.1 327.7 332.0 329.5 333.0 329.7C334.0 329.9 335.0 328.8 335.9 327.1C336.8 325.4 337.3 322.6 338.5 319.4C339.7 316.2 341.1 311.7 343.0 307.8C344.9 303.9 347.2 300.3 350.1 296.2C353.0 292.1 356.8 287.7 360.4 283.4C364.0 279.1 368.6 274.6 372.0 270.5C375.4 266.4 378.6 262.8 381.0 258.9C383.4 255.0 385.0 250.7 386.1 247.3C387.2 243.9 387.5 241.6 387.4 238.3C387.3 235.0 385.8 229.2 385.5 227.4C386.1 228.8 388.5 232.8 389.3 235.7C390.0 238.6 390.3 241.5 390.0 244.7C389.7 247.9 388.9 251.6 387.4 255.0C385.9 258.4 383.8 261.7 381.0 265.3C378.2 268.9 374.1 272.8 370.7 276.9C367.3 281.0 363.6 285.3 360.4 289.8C357.2 294.3 353.8 299.4 351.4 303.9C349.0 308.4 347.5 312.7 346.2 316.8C344.9 320.9 344.2 325.2 343.7 328.4C343.2 331.6 343.2 334.5 343.3 336.1C343.4 337.7 344.1 337.4 344.3 337.7C345.3 336.2 347.9 332.3 350.1 328.4C352.4 324.5 354.8 319.4 357.8 314.2C360.8 309.1 364.5 303.1 368.1 297.5C371.8 291.9 376.1 286.0 379.7 280.8C383.4 275.7 386.6 271.1 390.0 266.6C393.4 262.1 396.2 258.4 400.0 253.7C403.8 249.0 407.8 245.4 413.0 238.5C418.2 231.6 425.7 220.1 431.0 212.5C436.3 204.9 438.9 200.2 444.9 192.8C450.9 185.4 459.3 176.1 467.1 168.0C474.9 159.9 483.6 151.7 491.9 144.5C500.1 137.3 508.4 130.7 516.6 124.7C524.9 118.7 534.4 112.7 541.4 108.6C548.4 104.5 552.5 102.6 558.7 99.9C564.9 97.2 571.9 94.4 578.5 92.5C585.1 90.6 593.3 89.2 598.3 88.3C603.2 87.4 604.9 87.3 608.2 86.8C611.5 86.3 614.4 85.0 618.1 85.1C621.8 85.2 626.4 86.2 630.5 87.6C634.6 89.1 638.8 91.1 642.9 93.8C647.0 96.5 651.7 100.2 655.2 103.7C658.7 107.2 661.8 111.1 663.9 114.8C666.0 118.5 667.2 122.0 668.1 125.9C669.0 129.8 669.5 133.8 669.4 138.3C669.3 142.9 668.7 147.8 667.6 153.2C666.5 158.6 664.8 164.7 662.7 170.5C660.6 176.3 657.9 182.4 655.2 187.8C652.5 193.2 649.1 198.6 646.6 202.7C644.1 206.8 641.9 208.9 640.4 212.6C638.9 216.3 638.7 220.8 637.9 224.9C637.1 229.0 636.8 232.8 635.4 237.3C634.0 241.9 632.2 247.2 629.3 252.2C626.4 257.1 622.0 262.1 618.1 267.0C614.2 271.9 609.0 277.8 605.7 281.9C602.4 286.0 600.1 288.1 598.3 291.8C596.4 295.5 596.2 299.2 594.6 304.1C593.0 309.0 591.5 315.1 588.4 321.2C585.3 327.4 580.1 334.8 576.0 341.0C571.9 347.2 567.2 352.5 563.7 358.3C560.2 364.1 557.9 370.2 555.0 375.6C552.1 381.0 549.8 386.2 546.3 390.5C542.8 394.8 538.1 398.6 534.0 401.6C529.9 404.6 525.0 406.6 521.6 408.3C518.2 409.9 514.8 411.0 513.4 411.5C514.4 412.8 516.9 415.7 519.1 419.0C521.3 422.3 524.0 426.1 526.5 431.3C529.0 436.4 531.3 444.7 534.0 449.9C536.7 455.1 540.2 458.2 542.6 462.3C545.0 466.4 547.3 470.5 548.3 474.6C549.3 478.7 549.3 482.9 548.8 487.0C548.3 491.1 545.1 495.3 545.1 499.4C545.1 503.5 547.6 507.9 548.8 511.8C549.9 515.7 551.6 519.3 552.0 522.9C552.4 526.5 552.1 529.4 550.9 533.2C549.7 537.0 547.4 541.4 544.7 545.5C542.0 549.6 537.3 553.8 534.8 557.9C532.3 562.0 531.5 566.2 529.9 570.3C528.2 574.4 527.6 579.0 524.9 582.7C522.2 586.4 517.7 589.9 513.8 592.6C509.9 595.3 505.5 597.4 501.4 598.8C497.3 600.1 493.5 600.6 489.0 600.7C484.5 600.8 479.2 599.5 474.2 599.2C469.2 598.9 464.2 598.8 459.3 598.8C454.3 598.8 449.0 599.9 444.5 599.5C440.0 599.1 436.6 598.3 432.1 596.3C427.6 594.3 422.2 591.1 417.2 587.6C412.2 584.1 407.1 579.4 402.4 575.2C397.7 571.0 393.5 567.9 388.8 562.5C384.1 557.1 378.5 549.3 374.0 542.7C369.5 536.1 365.3 529.9 361.6 522.9C357.9 515.9 354.6 506.5 351.7 500.6C348.8 494.7 345.5 489.9 344.3 487.7C343.9 490.3 342.7 496.4 341.8 503.1C340.9 509.8 340.0 519.5 338.8 527.8C337.6 536.0 336.0 546.0 334.4 552.6C332.8 559.2 331.1 564.1 329.4 567.4C327.7 570.7 325.6 572.4 324.0 572.4C322.4 572.4 321.1 570.3 319.5 567.4C317.9 564.5 316.2 560.8 314.6 555.0C313.0 549.2 311.1 540.6 310.1 532.8C309.1 525.0 308.9 516.1 308.4 508.0C307.9 499.9 308.0 489.8 307.1 484.0C306.2 478.2 303.6 475.2 302.9 473.4C302.0 476.3 299.6 484.1 297.5 490.7C295.4 497.3 292.4 506.0 290.0 513.0C287.6 520.0 285.7 526.2 282.9 532.8C280.1 539.4 276.7 546.6 273.0 552.6C269.3 558.6 265.1 563.8 260.6 568.7C256.1 573.7 250.7 578.6 245.7 582.3C240.8 586.0 235.9 588.8 230.9 590.9C225.9 593.0 221.0 594.5 216.0 595.1C211.0 595.7 205.7 595.1 201.2 594.6C196.7 594.1 193.3 592.0 188.8 592.2C184.3 592.4 178.9 594.8 174.0 595.9C169.1 597.0 163.7 598.9 159.1 598.9C154.6 598.9 150.8 597.6 146.7 595.9C142.6 594.2 138.5 591.2 134.4 588.5C130.3 585.8 126.3 582.3 122.0 579.8C117.7 577.3 112.3 576.3 108.4 573.6C104.5 570.9 101.1 567.6 98.5 563.7C95.9 559.8 94.0 554.9 93.0 550.1C92.0 545.4 92.3 541.0 92.3 535.2C92.3 529.4 93.0 522.4 93.0 515.4C93.0 508.4 92.4 499.4 92.3 493.2C92.2 487.0 91.5 482.6 92.3 478.3C93.1 474.0 94.9 471.3 97.2 467.2C99.5 463.1 103.6 458.4 105.9 453.6C108.2 448.9 108.4 443.6 110.8 438.7C113.2 433.8 117.4 427.9 120.5 424.0C123.6 420.1 126.3 417.8 129.2 415.2C132.1 412.6 136.4 409.7 137.9 408.6C135.6 407.0 128.4 402.5 124.3 399.1C120.2 395.7 116.2 391.9 113.1 388.0C110.0 384.1 108.0 379.7 105.7 375.6C103.4 371.5 101.1 367.6 99.5 363.3C97.9 359.0 97.9 354.1 95.8 349.6C93.7 345.1 90.2 341.1 87.1 336.0C84.0 330.9 80.1 324.5 77.2 318.7C74.3 313.0 72.1 307.2 70.0 301.5C67.9 295.8 66.3 289.0 64.3 284.3C62.3 279.6 60.6 277.5 58.1 273.2C55.6 268.9 52.3 264.0 49.4 258.4C46.5 252.8 43.2 246.2 40.7 239.8C38.1 233.4 35.8 226.0 34.1 220.0C32.5 214.0 31.9 208.2 30.8 203.9C29.7 199.6 29.2 197.1 27.6 194.0C26.0 190.9 23.4 189.0 20.9 185.3C18.3 181.6 14.8 176.6 12.3 171.7C9.8 166.8 7.7 160.8 6.1 155.6C4.5 150.5 3.3 145.8 2.9 140.8C2.5 135.9 2.7 130.8 3.6 125.9C4.6 120.9 6.3 115.4 8.6 111.1C10.9 106.8 14.1 103.1 17.2 99.9C20.3 96.7 23.4 94.0 27.1 91.8C30.8 89.6 34.6 87.9 39.5 86.8C44.4 85.7 51.0 85.2 56.8 85.1C62.6 85.0 68.8 85.4 74.2 86.3C79.6 87.2 84.1 88.7 89.0 90.8C93.9 92.9 98.1 95.3 103.9 98.7C109.7 102.1 116.3 106.4 123.7 111.1C131.1 115.9 140.1 121.4 148.4 127.2C156.6 133.0 165.4 139.5 173.2 145.7C181.0 151.9 188.4 157.9 195.4 164.3C202.4 170.7 209.4 177.9 215.2 184.1C221.0 190.3 224.8 194.4 230.1 201.4C235.4 208.4 242.1 218.9 247.1 226.1C252.1 233.3 255.7 238.8 260.0 244.7C264.3 250.6 268.6 255.7 272.9 261.5C277.2 267.3 281.4 272.9 285.7 279.5C290.0 286.1 295.0 294.8 298.6 301.4C302.2 308.0 305.0 314.2 307.6 319.4C310.2 324.5 312.2 328.6 314.1 332.3C316.0 335.9 318.4 339.8 319.2 341.3Z"/></svg>
<span style="left:1390.5px;top:874.5px;height:17px;line-height:17px;font-size:13px;color:#ececec;font-weight:400;letter-spacing:-0.810px;">Слой 1</span>
<div style="left:1295px;top:983px;width:411px;height:27px;background:#535353;"></div>
<svg style="left:1458px;top:992px;" width="19" height="11" viewBox="0 0 19 11"><rect x="0.75" y="0.75" width="9" height="9.5" rx="4.5" stroke="#8a8a8a" stroke-width="1.5" fill="none"/><rect x="9.25" y="0.75" width="9" height="9.5" rx="4.5" stroke="#8a8a8a" stroke-width="1.5" fill="none"/><path d="M5.5 5.5H13.5" stroke="#8a8a8a" stroke-width="1.5"/></svg>
<span style="left:1494.5px;top:986.5px;height:21px;line-height:21px;font-size:16px;color:#d6d6d6;font-weight:400;letter-spacing:0.698px;font-style:italic;font-family:"Liberation Serif",serif;">fx</span>
<svg style="left:1507px;top:1004px;" width="5" height="3" viewBox="0 0 5 3"><path d="M0 0H5L2.5 3Z" fill="#d0d0d0"/></svg>
<svg style="left:1527px;top:991px;" width="17" height="13" viewBox="0 0 17 13"><rect x="0" y="0" width="17" height="13" rx="1" fill="#d6d6d6"/><circle cx="8.5" cy="6.5" r="4" fill="#535353"/></svg>
<svg style="left:1561px;top:990px;" width="15" height="15" viewBox="0 0 15 15"><circle cx="7.5" cy="7.5" r="6.5" stroke="#d6d6d6" fill="none" stroke-width="1.5"/><path d="M3 12A6.5 6.5 0 0 0 12 3Z" fill="#d6d6d6"/></svg>
<svg style="left:1574px;top:1004px;" width="5" height="3" viewBox="0 0 5 3"><path d="M0 0H5L2.5 3Z" fill="#d0d0d0"/></svg>
<svg style="left:1595px;top:991px;" width="16" height="13" viewBox="0 0 16 13"><path d="M0.5 1.5C0.5 0.9 0.9 0.5 1.5 0.5H6L7.5 2.5H14.5C15.1 2.5 15.5 2.9 15.5 3.5V12.5H0.5Z" fill="#d6d6d6"/></svg>
<svg style="left:1628px;top:990px;" width="14" height="14" viewBox="0 0 14 14"><rect x="0.75" y="0.75" width="12.5" height="12.5" stroke="#d6d6d6" fill="none" stroke-width="1.5"/><path d="M7 3.5V10.5M3.5 7H10.5" stroke="#d6d6d6" fill="none" stroke-width="1.5"/></svg>
<svg style="left:1663px;top:989px;" width="13" height="16" viewBox="0 0 13 16"><path d="M0.5 3H12.5M4.5 3V1H8.5V3M1.8 3.5L2.5 15.25H10.5L11.2 3.5M5 6V13M8 6V13" stroke="#8a8a8a" stroke-width="1.4" fill="none"/></svg>
</body></html>
